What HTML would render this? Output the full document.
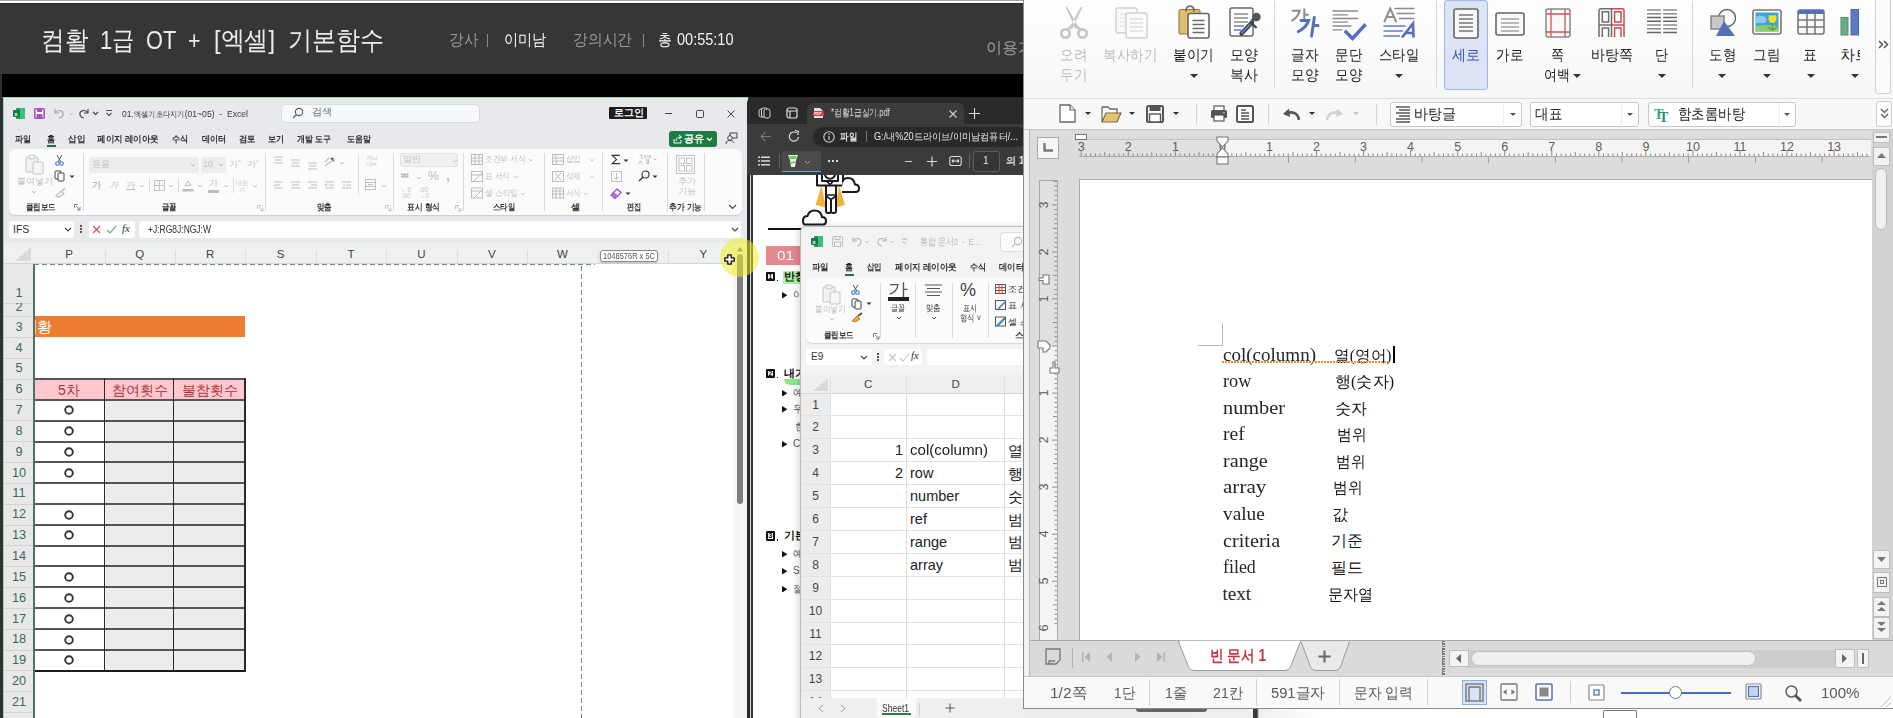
<!DOCTYPE html>
<html><head><meta charset="utf-8">
<style>
*{box-sizing:border-box}
body{margin:0;width:1893px;height:718px;position:relative;overflow:hidden;background:#303030;font-family:"Liberation Sans",sans-serif}
.a{position:absolute}
.t{position:absolute;white-space:nowrap;line-height:1}
</style></head><body>
<!-- ===== HEADER ===== -->
<div class="a" style="left:0;top:0;width:1023px;height:74px;background:linear-gradient(#a5a5a5 0 1px,#fcfcfc 1px 3px,#2c2c2c 3px 4px,#363636 4px)"></div>
<div class="t" style="transform:scaleX(0.9096);transform-origin:0 0;left:40.7px;top:28px;font-size:25.5px;color:#ececec">컴활</div>
<div class="t" style="transform:scaleX(0.8610);transform-origin:0 0;left:100px;top:28px;font-size:25.5px;color:#ececec">1급</div>
<div class="t" style="transform:scaleX(0.8526);transform-origin:0 0;left:145.6px;top:28px;font-size:25.5px;color:#ececec">OT</div>
<div class="t" style="transform:scaleX(0.8386);transform-origin:0 0;left:188px;top:28px;font-size:25.5px;color:#ececec">+</div>
<div class="t" style="transform:scaleX(0.9218);transform-origin:0 0;left:213.7px;top:28px;font-size:25.5px;color:#ececec">[엑셀]</div>
<div class="t" style="transform:scaleX(0.9288);transform-origin:0 0;left:288px;top:28px;font-size:25.5px;color:#ececec">기본함수</div>
<div class="t" style="transform:scaleX(0.9125);transform-origin:0 0;left:448.8px;top:32px;font-size:16px;color:#9a9a9a">강사</div>
<div class="t" style="transform:scaleX(0.8854);transform-origin:0 0;left:503.5px;top:32px;font-size:16px;color:#f4f4f4">이미남</div>
<div class="t" style="transform:scaleX(0.9234);transform-origin:0 0;left:573.4px;top:32px;font-size:16px;color:#9a9a9a">강의시간</div>
<div class="t" style="transform:scaleX(0.8625);transform-origin:0 0;left:657.7px;top:32px;font-size:16px;color:#f4f4f4">총</div>
<div class="t" style="transform:scaleX(0.9072);transform-origin:0 0;left:676.5px;top:32px;font-size:16px;color:#f4f4f4">00:55:10</div>
<div class="a" style="left:486.5px;top:34px;width:1px;height:13px;background:#8c8c8c"></div>
<div class="a" style="left:642.5px;top:34px;width:1px;height:13px;background:#8c8c8c"></div>
<div class="t" style="left:986px;top:40px;font-size:16px;color:#9a9a9a">이용가</div>
<div class="a" style="left:2px;top:74px;width:1021px;height:23px;background:#000"></div>


<!-- ===== EXCEL MAIN ===== -->
<div class="a" style="left:3px;top:97px;width:745px;height:621px;background:#e7e9ec;border-top:1px solid #9fd6b8;border-left:1px solid #9fd6b8"></div>
<!-- title row icons -->
<svg class="a" style="left:13px;top:108px" width="12" height="11" viewBox="0 0 12 11"><rect x="3" y="0" width="9" height="11" rx="1" fill="#1f9d55"/><rect x="7" y="0" width="5" height="11" fill="#37c27a"/><rect x="0" y="2" width="7" height="7" rx="1" fill="#107c41"/><text x="1.3" y="7.8" font-size="6" fill="#fff" font-family="Liberation Sans" font-weight="bold">x</text></svg>
<svg class="a" style="left:34px;top:108px" width="11" height="11" viewBox="0 0 11 11"><rect x="0.8" y="0.8" width="9.4" height="9.4" rx="1" fill="#fff" stroke="#a64fc2" stroke-width="1.6"/><rect x="3" y="1" width="5" height="3" fill="#a64fc2"/><rect x="2.5" y="6" width="6" height="4" fill="#a64fc2"/></svg>
<svg class="a" style="left:53px;top:108px" width="12" height="11" viewBox="0 0 12 11"><path d="M2 1 L2 5 L6 5 M2 5 C4 1 11 2 10 7 C9 9 7 10 6 10" fill="none" stroke="#a8a8a8" stroke-width="1.2"/></svg>
<div class="t" style="left:68px;top:109px;font-size:7px;color:#b0b0b0">⌄</div>
<svg class="a" style="left:78px;top:108px" width="12" height="11" viewBox="0 0 12 11"><path d="M10 1 L10 5 L6 5 M10 5 C8 1 1 2 2 7 C3 9 5 10 6 10" fill="none" stroke="#4a4a4a" stroke-width="1.2"/></svg>
<svg class="a" style="left:92px;top:111px" width="7" height="5" viewBox="0 0 7 5"><path d="M1 1 L3.5 3.5 L6 1" fill="none" stroke="#444" stroke-width="1.1"/></svg>
<svg class="a" style="left:105px;top:109px" width="8" height="8" viewBox="0 0 8 8"><path d="M1 1.5 H7 M1.5 4 L4 6.5 L6.5 4" fill="none" stroke="#555" stroke-width="1.1"/></svg>
<div class="t" style="transform:scaleX(0.9053);transform-origin:0 0;left:122px;top:109px;font-size:9.5px;color:#3a3a3a">01.<span style="font-size:8px">엑셀기초다지기</span>(01~05)&nbsp;&nbsp;-&nbsp;&nbsp;Excel</div>
<!-- search -->
<div class="a" style="left:281px;top:104px;width:199px;height:19px;background:#f7f8f9;border:1px solid #d9dcdf;border-radius:4px"></div>
<svg class="a" style="left:292px;top:107px" width="12" height="12" viewBox="0 0 12 12"><circle cx="7" cy="5" r="3.6" fill="none" stroke="#555" stroke-width="1.1"/><path d="M4.3 7.7 L1 11" stroke="#555" stroke-width="1.2"/></svg>
<div class="t" style="left:312px;top:107px;font-size:10px;color:#6a6a6a">검색</div>
<!-- login / window controls -->
<div class="a" style="left:609px;top:107px;width:38px;height:12px;background:#1d1d1d;border-radius:1px"></div>
<div class="t" style="left:614px;top:108px;font-size:9.5px;color:#fff;font-weight:bold">로그인</div>
<div class="a" style="left:665px;top:113px;width:7px;height:1px;background:#444"></div>
<div class="a" style="left:696px;top:110px;width:8px;height:8px;border:1px solid #444;border-radius:1.5px"></div>
<svg class="a" style="left:727px;top:110px" width="8" height="8" viewBox="0 0 8 8"><path d="M0.5 0.5 L7.5 7.5 M7.5 0.5 L0.5 7.5" stroke="#444" stroke-width="1"/></svg>
<!-- tabs -->
<div class="t" style="transform:scaleX(0.8889);transform-origin:0 0;left:15px;top:134.5px;font-size:9px;color:#2e2e2e;font-weight:bold">파일</div>
<div class="t" style="transform:scaleX(0.8889);transform-origin:0 0;left:47px;top:134.5px;font-size:9px;color:#2e2e2e;font-weight:bold">홈</div>
<div class="t" style="transform:scaleX(0.9500);transform-origin:0 0;left:67.6px;top:134.5px;font-size:9px;color:#2e2e2e;font-weight:bold">삽입</div>
<div class="t" style="transform:scaleX(0.9463);transform-origin:0 0;left:97px;top:134.5px;font-size:9px;color:#2e2e2e;font-weight:bold">페이지 레이아웃</div>
<div class="t" style="transform:scaleX(0.9111);transform-origin:0 0;left:172px;top:134.5px;font-size:9px;color:#2e2e2e;font-weight:bold">수식</div>
<div class="t" style="transform:scaleX(0.9074);transform-origin:0 0;left:201.5px;top:134.5px;font-size:9px;color:#2e2e2e;font-weight:bold">데이터</div>
<div class="t" style="transform:scaleX(0.9278);transform-origin:0 0;left:239px;top:134.5px;font-size:9px;color:#2e2e2e;font-weight:bold">검토</div>
<div class="t" style="transform:scaleX(0.8889);transform-origin:0 0;left:268px;top:134.5px;font-size:9px;color:#2e2e2e;font-weight:bold">보기</div>
<div class="t" style="transform:scaleX(0.8828);transform-origin:0 0;left:297px;top:134.5px;font-size:9px;color:#2e2e2e;font-weight:bold">개발 도구</div>
<div class="t" style="transform:scaleX(0.8889);transform-origin:0 0;left:347px;top:134.5px;font-size:9px;color:#2e2e2e;font-weight:bold">도움말</div>
<div class="a" style="left:47px;top:145px;width:9px;height:2px;background:#1e7145"></div>
<!-- share -->
<div class="a" style="left:669px;top:131px;width:48px;height:16px;background:#1e7b45;border-radius:3px"></div>
<svg class="a" style="left:673px;top:134px" width="10" height="10" viewBox="0 0 10 10"><path d="M1 5 V9 H8 V6 M3 7 C3 4 5 3 8 3 M6 1 L8.5 3 L6 5" fill="none" stroke="#fff" stroke-width="1"/></svg>
<div class="t" style="left:684px;top:134px;font-size:10px;color:#fff;font-weight:bold">공유</div>
<svg class="a" style="left:706px;top:137px" width="7" height="5" viewBox="0 0 7 5"><path d="M1 1 L3.5 3.5 L6 1" fill="none" stroke="#fff" stroke-width="1.1"/></svg>
<svg class="a" style="left:725px;top:132px" width="13" height="13" viewBox="0 0 13 13"><rect x="5" y="1" width="7" height="5" fill="none" stroke="#444" stroke-width="1"/><circle cx="5" cy="6" r="2.3" fill="#e7e9ec" stroke="#444" stroke-width="1"/><path d="M1 12 C1 9 3 8.5 5 8.5 C7 8.5 8 9 9 11" fill="none" stroke="#444" stroke-width="1"/></svg>
<!-- ribbon panel -->
<div class="a" style="left:9px;top:149px;width:733px;height:66px;background:#fbfbfb;border-radius:6px;box-shadow:0 1px 1px rgba(0,0,0,0.12)"></div>


<!-- clipboard group -->
<svg class="a" style="left:25px;top:154px" width="20" height="21" viewBox="0 0 20 21"><rect x="1" y="3" width="12" height="15" rx="1" fill="#f2f2f2" stroke="#c4c4c4"/><rect x="4" y="1" width="6" height="4" rx="1" fill="#f2f2f2" stroke="#c4c4c4"/><rect x="8" y="8" width="10" height="12" rx="1" fill="#f6f6f6" stroke="#c4c4c4"/></svg>
<div class="t" style="left:17px;top:177px;font-size:8.5px;color:#bcbcbc">붙여넣기</div>
<svg class="a" style="left:31px;top:190px" width="6" height="4" viewBox="0 0 6 4"><path d="M1 1 L3 3 L5 1" fill="none" stroke="#c0c0c0"/></svg>
<svg class="a" style="left:55px;top:154px" width="9" height="12" viewBox="0 0 9 12"><path d="M2 1 L6 8 M7 1 L3 8" stroke="#555" stroke-width="1"/><circle cx="2.5" cy="9.5" r="1.8" fill="none" stroke="#3a7fc8" stroke-width="1.1"/><circle cx="6.5" cy="9.5" r="1.8" fill="none" stroke="#3a7fc8" stroke-width="1.1"/></svg>
<svg class="a" style="left:54px;top:170px" width="12" height="12" viewBox="0 0 12 12"><rect x="1" y="1" width="6" height="8" rx="1" fill="none" stroke="#444"/><rect x="4" y="3" width="6" height="8" rx="1" fill="#fbfbfb" stroke="#444"/></svg>
<svg class="a" style="left:69px;top:175px" width="6" height="4" viewBox="0 0 6 4"><path d="M0.5 0.5 L3 3 L5.5 0.5" fill="#333"/></svg>
<svg class="a" style="left:55px;top:187px" width="11" height="11" viewBox="0 0 11 11"><path d="M1 9 L6 4 L9 7 L4 10 Z" fill="none" stroke="#bdbdbd" stroke-width="1.2"/><path d="M7 4 L10 1" stroke="#bdbdbd" stroke-width="1.6"/></svg>
<div class="t" style="transform:scaleX(0.8333);transform-origin:0 0;left:26.3px;top:203px;font-size:9px;color:#333;font-weight:bold">클립보드</div>
<svg class="a" style="left:74px;top:204px" width="7" height="7" viewBox="0 0 7 7"><path d="M0.5 0.5 H4 M0.5 0.5 V4 M2 2 L6 6 M6 3 V6 H3" fill="none" stroke="#777" stroke-width="0.9"/></svg>
<div class="a" style="left:83px;top:153px;width:1px;height:58px;background:#dadada"></div>
<!-- font group -->
<div class="a" style="left:89px;top:157px;width:110px;height:16px;background:#ededed;border-radius:3px"></div>
<div class="t" style="left:92px;top:160px;font-size:9px;color:#c2c2c2">돋움</div>
<svg class="a" style="left:190px;top:163px" width="6" height="4" viewBox="0 0 6 4"><path d="M1 1 L3 3 L5 1" fill="none" stroke="#b8b8b8"/></svg>
<div class="a" style="left:201px;top:157px;width:25px;height:16px;background:#ededed;border-radius:3px"></div>
<div class="t" style="left:203px;top:160px;font-size:9px;color:#c2c2c2">10</div>
<svg class="a" style="left:218px;top:163px" width="6" height="4" viewBox="0 0 6 4"><path d="M1 1 L3 3 L5 1" fill="none" stroke="#b8b8b8"/></svg>
<div class="t" style="left:229px;top:160px;font-size:9px;color:#bdbdbd">가ˆ</div>
<div class="t" style="left:247px;top:160px;font-size:9px;color:#bdbdbd">가ˇ</div>
<div class="t" style="left:92px;top:181px;font-size:9px;color:#bcbcbc;font-weight:bold">가</div>
<div class="t" style="left:109px;top:181px;font-size:9px;color:#bcbcbc;font-style:italic">가</div>
<div class="t" style="left:126px;top:181px;font-size:9px;color:#bcbcbc;text-decoration:underline">가</div>
<svg class="a" style="left:139px;top:184px" width="6" height="4" viewBox="0 0 6 4"><path d="M1 1 L3 3 L5 1" fill="none" stroke="#c0c0c0"/></svg>
<div class="a" style="left:149px;top:178px;width:1px;height:15px;background:#dcdcdc"></div>
<svg class="a" style="left:154px;top:180px" width="11" height="11" viewBox="0 0 11 11"><rect x="0.5" y="0.5" width="10" height="10" fill="none" stroke="#c4c4c4"/><path d="M5.5 0.5 V10.5 M0.5 5.5 H10.5" stroke="#c4c4c4"/></svg>
<svg class="a" style="left:168px;top:184px" width="6" height="4" viewBox="0 0 6 4"><path d="M1 1 L3 3 L5 1" fill="none" stroke="#c0c0c0"/></svg>
<div class="a" style="left:178px;top:178px;width:1px;height:15px;background:#dcdcdc"></div>
<svg class="a" style="left:182px;top:179px" width="12" height="13" viewBox="0 0 12 13"><path d="M3 7 L6 2 L9 6 Z" fill="none" stroke="#bbb"/><rect x="0.5" y="10" width="11" height="2.5" fill="#bdbdbd"/></svg>
<svg class="a" style="left:197px;top:184px" width="6" height="4" viewBox="0 0 6 4"><path d="M1 1 L3 3 L5 1" fill="none" stroke="#c0c0c0"/></svg>
<div class="t" style="left:209px;top:179px;font-size:9px;color:#bcbcbc">가</div>
<div class="a" style="left:208px;top:190px;width:11px;height:2.5px;background:#bdbdbd"></div>
<svg class="a" style="left:223px;top:184px" width="6" height="4" viewBox="0 0 6 4"><path d="M1 1 L3 3 L5 1" fill="none" stroke="#c0c0c0"/></svg>
<div class="a" style="left:233px;top:178px;width:1px;height:15px;background:#dcdcdc"></div>
<div class="t" style="left:236px;top:180px;font-size:6px;color:#c4c4c4;line-height:1.1">내천<br>&nbsp;&nbsp;기</div>
<svg class="a" style="left:252px;top:184px" width="6" height="4" viewBox="0 0 6 4"><path d="M1 1 L3 3 L5 1" fill="none" stroke="#c0c0c0"/></svg>
<div class="t" style="transform:scaleX(0.8222);transform-origin:0 0;left:162px;top:203px;font-size:9px;color:#333;font-weight:bold">글꼴</div>
<svg class="a" style="left:257px;top:205px" width="7" height="7" viewBox="0 0 7 7"><path d="M0.5 0.5 H4 M0.5 0.5 V4 M2 2 L6 6 M6 3 V6 H3" fill="none" stroke="#bbb" stroke-width="0.9"/></svg>
<div class="a" style="left:265px;top:153px;width:1px;height:58px;background:#dadada"></div>
<!-- align group -->
<svg class="a" style="left:273px;top:155px" width="80" height="36" viewBox="0 0 80 36" stroke="#bdbdbd" stroke-width="1.1">
<path d="M1 2 H10 M2 5 H9 M1 8 H10"/><path d="M18 5 H27 M19 8 H26 M18 11 H27"/><path d="M35 8 H44 M36 11 H43 M35 14 H44"/><path d="M52 11 L61 4 M57 3 H61 V7 M52 7 L56 3" />
<path d="M1 27 H10 M1 30 H7 M1 33 H10"/><path d="M18 27 H27 M19 30 H26 M18 33 H27"/><path d="M35 27 H44 M38 30 H44 M35 33 H44"/><path d="M52 27 H61 M56 30 H61 M52 33 H61 M52 30 L54 29 M52 30 L54 31"/><path d="M69 27 H78 M73 30 H78 M69 33 H78 M70 30 H72"/>
</svg>
<svg class="a" style="left:339px;top:161px" width="6" height="4" viewBox="0 0 6 4"><path d="M1 1 L3 3 L5 1" fill="none" stroke="#c0c0c0"/></svg>
<div class="a" style="left:358px;top:155px;width:1px;height:40px;background:#dcdcdc"></div>
<div class="t" style="left:366px;top:155px;font-size:6px;color:#c0c0c0;line-height:1">가나<br>다↵</div>
<svg class="a" style="left:365px;top:179px" width="11" height="11" viewBox="0 0 11 11"><rect x="0.5" y="0.5" width="10" height="10" fill="none" stroke="#c0c0c0"/><path d="M0.5 3.5 H10.5 M0.5 7.5 H10.5 M3 5.5 H8" stroke="#c0c0c0"/></svg>
<svg class="a" style="left:381px;top:184px" width="6" height="4" viewBox="0 0 6 4"><path d="M1 1 L3 3 L5 1" fill="none" stroke="#c0c0c0"/></svg>
<div class="t" style="transform:scaleX(0.8333);transform-origin:0 0;left:317px;top:203px;font-size:9px;color:#333;font-weight:bold">맞춤</div>
<svg class="a" style="left:385px;top:205px" width="7" height="7" viewBox="0 0 7 7"><path d="M0.5 0.5 H4 M0.5 0.5 V4 M2 2 L6 6 M6 3 V6 H3" fill="none" stroke="#bbb" stroke-width="0.9"/></svg>
<div class="a" style="left:393px;top:153px;width:1px;height:58px;background:#dadada"></div>
<!-- number group -->
<div class="a" style="left:400px;top:152.5px;width:58px;height:14.5px;background:#f0f0f0;border:1px solid #e2e2e2;border-radius:3px"></div>
<div class="t" style="left:403px;top:155px;font-size:8.5px;color:#c4c4c4">일반</div>
<svg class="a" style="left:452px;top:159px" width="6" height="4" viewBox="0 0 6 4"><path d="M1 1 L3 3 L5 1" fill="none" stroke="#c8c8c8"/></svg>
<div class="t" style="left:401px;top:172px;font-size:8px;color:#c0c0c0;font-weight:bold">₩</div>
<svg class="a" style="left:416px;top:176px" width="6" height="4" viewBox="0 0 6 4"><path d="M1 1 L3 3 L5 1" fill="none" stroke="#c0c0c0"/></svg>
<div class="t" style="left:428px;top:170px;font-size:12px;color:#bdbdbd">%</div>
<div class="t" style="left:446px;top:168px;font-size:14px;color:#bdbdbd;font-weight:bold">,</div>
<div class="t" style="left:401px;top:187px;font-size:6.5px;color:#c4c4c4;line-height:0.9">←0<br>.00</div>
<div class="t" style="left:419px;top:187px;font-size:6.5px;color:#c4c4c4;line-height:0.9">.00<br>→0</div>
<div class="t" style="transform:scaleX(0.8568);transform-origin:0 0;left:407px;top:203px;font-size:9px;color:#333;font-weight:bold">표시 형식</div>
<svg class="a" style="left:455px;top:205px" width="7" height="7" viewBox="0 0 7 7"><path d="M0.5 0.5 H4 M0.5 0.5 V4 M2 2 L6 6 M6 3 V6 H3" fill="none" stroke="#bbb" stroke-width="0.9"/></svg>
<div class="a" style="left:463px;top:153px;width:1px;height:58px;background:#dadada"></div>
<!-- styles group -->
<svg class="a" style="left:471px;top:154px" width="12" height="45" viewBox="0 0 12 45" fill="none" stroke="#bdbdbd"><rect x="0.5" y="0.5" width="11" height="10"/><path d="M0.5 4 H11.5 M0.5 7 H11.5 M4 0.5 V10.5 M8 0.5 V10.5"/><rect x="0.5" y="17.5" width="11" height="10"/><path d="M0.5 21 H11.5 M3 27 L11 19"/><rect x="0.5" y="34" width="11" height="10"/><path d="M0.5 37 H11.5 M3 44 L11 36"/></svg>
<div class="t" style="transform:scaleX(0.8524);transform-origin:0 0;left:485px;top:155px;font-size:9px;color:#c2c2c2">조건부 서식</div><svg class="a" style="left:528px;top:158.0px" width="6" height="4" viewBox="0 0 6 4"><path d="M1 1 L3 3 L5 1" fill="none" stroke="#c4c4c4" stroke-width="0.9"/></svg>
<div class="t" style="transform:scaleX(0.8470);transform-origin:0 0;left:485px;top:172px;font-size:9px;color:#c2c2c2">표 서식</div><svg class="a" style="left:512.5px;top:175.0px" width="6" height="4" viewBox="0 0 6 4"><path d="M1 1 L3 3 L5 1" fill="none" stroke="#c4c4c4" stroke-width="0.9"/></svg>
<div class="t" style="transform:scaleX(0.8568);transform-origin:0 0;left:485px;top:189px;font-size:9px;color:#c2c2c2">셀 스타일</div><svg class="a" style="left:520px;top:192.0px" width="6" height="4" viewBox="0 0 6 4"><path d="M1 1 L3 3 L5 1" fill="none" stroke="#c4c4c4" stroke-width="0.9"/></svg>
<div class="t" style="transform:scaleX(0.8148);transform-origin:0 0;left:493px;top:203px;font-size:9px;color:#333;font-weight:bold">스타일</div>
<div class="a" style="left:544px;top:153px;width:1px;height:58px;background:#dadada"></div>
<!-- cells group -->
<svg class="a" style="left:552px;top:154px" width="12" height="45" viewBox="0 0 12 45" fill="none" stroke="#bdbdbd"><rect x="0.5" y="0.5" width="11" height="10"/><path d="M0.5 4 H11.5 M0.5 7 H11.5 M4 0.5 V10.5"/><rect x="0.5" y="17.5" width="11" height="10"/><path d="M3 19 L9 26 M9 19 L3 26"/><rect x="0.5" y="34" width="11" height="10"/><path d="M0.5 37 H11.5 M0.5 40 H11.5 M4 34 V44 M8 34 V44"/></svg>
<div class="t" style="transform:scaleX(0.8333);transform-origin:0 0;left:566px;top:155px;font-size:9px;color:#c2c2c2">삽입</div><svg class="a" style="left:588.5px;top:158.0px" width="6" height="4" viewBox="0 0 6 4"><path d="M1 1 L3 3 L5 1" fill="none" stroke="#c4c4c4" stroke-width="0.9"/></svg>
<div class="t" style="transform:scaleX(0.8333);transform-origin:0 0;left:566px;top:172px;font-size:9px;color:#c2c2c2">삭제</div><svg class="a" style="left:588.5px;top:175.0px" width="6" height="4" viewBox="0 0 6 4"><path d="M1 1 L3 3 L5 1" fill="none" stroke="#c4c4c4" stroke-width="0.9"/></svg>
<div class="t" style="transform:scaleX(0.8333);transform-origin:0 0;left:566px;top:189px;font-size:9px;color:#c2c2c2">서식</div><svg class="a" style="left:583px;top:192.0px" width="6" height="4" viewBox="0 0 6 4"><path d="M1 1 L3 3 L5 1" fill="none" stroke="#c4c4c4" stroke-width="0.9"/></svg>
<div class="t" style="left:571px;top:203px;font-size:9px;color:#333;font-weight:bold">셀</div>
<div class="a" style="left:602px;top:153px;width:1px;height:58px;background:#dadada"></div>
<!-- editing group -->
<svg class="a" style="left:610px;top:154px" width="12" height="11" viewBox="610 154 12 11"><path d="M620 155.4 H612.2 L616.6 159.5 L612.2 163.6 H620.2" fill="none" stroke="#333" stroke-width="1.1"/></svg>
<svg class="a" style="left:623px;top:159px" width="6" height="4" viewBox="0 0 6 4"><path d="M0.5 0.5 L3 3 L5.5 0.5" fill="#333"/></svg>
<svg class="a" style="left:638px;top:154px" width="19" height="11" viewBox="0 0 19 11" fill="none" stroke="#bdbdbd"><path d="M6 2 H13 L10.5 5.5 V9.5 L9 10 V5.5 Z"/><path d="M1.5 1 H4 V5 M1 9.5 L2.5 7 L4 9.5"/><path d="M15.5 4.5 L17 6 L18.5 4.5"/></svg>
<svg class="a" style="left:611px;top:171px" width="11" height="11" viewBox="0 0 11 11" fill="none" stroke="#c0c0c0"><rect x="0.5" y="0.5" width="10" height="10"/><path d="M5.5 2 V8 M3 6 L5.5 8.5 L8 6"/></svg>
<svg class="a" style="left:638px;top:170px" width="12" height="12" viewBox="0 0 12 12"><circle cx="7.5" cy="4.5" r="3.5" fill="none" stroke="#333" stroke-width="1.1"/><path d="M5 7 L1 11" stroke="#333" stroke-width="1.3"/></svg>
<svg class="a" style="left:652px;top:175px" width="6" height="4" viewBox="0 0 6 4"><path d="M0.5 0.5 L3 3 L5.5 0.5" fill="#333"/></svg>
<svg class="a" style="left:610px;top:187px" width="12" height="12" viewBox="0 0 12 12"><path d="M1 8 L7 2 L11 5.5 L5 11.5 Z" fill="#fff" stroke="#a552c4" stroke-width="1.4" stroke-linejoin="round"/><path d="M1 8 L4 5 L7.8 8.5 L5 11.5 Z" fill="#b86ad6"/></svg>
<svg class="a" style="left:625px;top:192px" width="6" height="4" viewBox="0 0 6 4"><path d="M0.5 0.5 L3 3 L5.5 0.5" fill="#333"/></svg>
<div class="t" style="transform:scaleX(0.8056);transform-origin:0 0;left:627px;top:203px;font-size:9px;color:#333;font-weight:bold">편집</div>
<div class="a" style="left:667px;top:153px;width:1px;height:58px;background:#dadada"></div>
<svg class="a" style="left:676px;top:155px" width="19" height="19" viewBox="0 0 19 19" fill="none" stroke="#c4c4c4"><rect x="0.5" y="0.5" width="18" height="18"/><rect x="3" y="3" width="5.5" height="5.5"/><rect x="10.5" y="3" width="5.5" height="5.5"/><rect x="3" y="10.5" width="5.5" height="5.5"/><rect x="10.5" y="10.5" width="5.5" height="5.5"/></svg>
<div class="t" style="left:678px;top:177px;font-size:8.5px;color:#c4c4c4;line-height:1.15">추가<br>기능</div>
<div class="t" style="transform:scaleX(0.8568);transform-origin:0 0;left:669px;top:203px;font-size:9px;color:#333;font-weight:bold">추가 기능</div>
<div class="a" style="left:704px;top:153px;width:1px;height:58px;background:#dadada"></div>
<svg class="a" style="left:728px;top:204px" width="9" height="6" viewBox="0 0 9 6"><path d="M1 1 L4.5 4.5 L8 1" fill="none" stroke="#444" stroke-width="1.1"/></svg>
<!-- formula row -->
<div class="a" style="left:9px;top:221px;width:65px;height:17px;background:#fff;border-radius:3px"></div>
<div class="t" style="left:13px;top:224px;font-size:10.5px;color:#333">IFS</div>
<svg class="a" style="left:64px;top:227px" width="8" height="5" viewBox="0 0 8 5"><path d="M1 1 L4 4 L7 1" fill="none" stroke="#444" stroke-width="1.1"/></svg>
<div class="a" style="left:80px;top:225px;width:2px;height:2px;background:#555;box-shadow:0 3px 0 #555,0 6px 0 #555"></div>
<div class="a" style="left:89px;top:221px;width:46px;height:17px;background:#fff;border-radius:3px"></div>
<svg class="a" style="left:92px;top:225px" width="9" height="9" viewBox="0 0 9 9"><path d="M1 1 L8 8 M8 1 L1 8" stroke="#d9534f" stroke-width="1.2"/></svg>
<svg class="a" style="left:106px;top:225px" width="11" height="9" viewBox="0 0 11 9"><path d="M1 5 L4 8 L10 1" fill="none" stroke="#6cba7e" stroke-width="1.2"/></svg>
<div class="t" style="left:122px;top:223px;font-size:11px;color:#333;font-family:'Liberation Serif',serif;font-style:italic">fx</div>
<div class="a" style="left:139px;top:221px;width:602px;height:17px;background:#fff;border-radius:3px"></div>
<div class="t" style="transform:scaleX(0.8088);transform-origin:0 0;left:148px;top:224px;font-size:10.5px;color:#333">+J:RG8J:NGJ:W</div>
<svg class="a" style="left:731px;top:227px" width="8" height="5" viewBox="0 0 8 5"><path d="M1 1 L4 4 L7 1" fill="none" stroke="#444" stroke-width="1.1"/></svg>

<div class="a" style="left:4px;top:238px;width:729px;height:5px;background:#e7e9ec"></div>
<div class="a" style="left:4px;top:243px;width:729px;height:21px;background:#eff0f0"></div>
<svg class="a" style="left:14px;top:246px" width="18" height="16" viewBox="0 0 18 16"><path d="M17 1 V15 H1 Z" fill="#d9dbdb"/></svg>
<div class="a" style="left:4px;top:264px;width:30px;height:454px;background:#e8e8e8"></div>
<div class="a" style="left:34px;top:264px;width:699px;height:454px;background:#fff"></div>
<div class="t" style="left:59.2px;top:249px;width:20px;text-align:center;font-size:11.5px;color:#404040">P</div>
<div class="a" style="left:104.5px;top:250px;width:1px;height:14px;background:#dcdede"></div>
<div class="t" style="left:129.7px;top:249px;width:20px;text-align:center;font-size:11.5px;color:#404040">Q</div>
<div class="a" style="left:174.9px;top:250px;width:1px;height:14px;background:#dcdede"></div>
<div class="t" style="left:200.1px;top:249px;width:20px;text-align:center;font-size:11.5px;color:#404040">R</div>
<div class="a" style="left:245.4px;top:250px;width:1px;height:14px;background:#dcdede"></div>
<div class="t" style="left:270.6px;top:249px;width:20px;text-align:center;font-size:11.5px;color:#404040">S</div>
<div class="a" style="left:315.8px;top:250px;width:1px;height:14px;background:#dcdede"></div>
<div class="t" style="left:341.0px;top:249px;width:20px;text-align:center;font-size:11.5px;color:#404040">T</div>
<div class="a" style="left:386.2px;top:250px;width:1px;height:14px;background:#dcdede"></div>
<div class="t" style="left:411.5px;top:249px;width:20px;text-align:center;font-size:11.5px;color:#404040">U</div>
<div class="a" style="left:456.7px;top:250px;width:1px;height:14px;background:#dcdede"></div>
<div class="t" style="left:481.9px;top:249px;width:20px;text-align:center;font-size:11.5px;color:#404040">V</div>
<div class="a" style="left:527.2px;top:250px;width:1px;height:14px;background:#dcdede"></div>
<div class="t" style="left:552.4px;top:249px;width:20px;text-align:center;font-size:11.5px;color:#404040">W</div>
<div class="a" style="left:597.6px;top:250px;width:1px;height:14px;background:#dcdede"></div>
<div class="a" style="left:668.1px;top:250px;width:1px;height:14px;background:#dcdede"></div>
<div class="t" style="left:693.3px;top:249px;width:20px;text-align:center;font-size:11.5px;color:#404040">Y</div>
<div class="a" style="left:738.5px;top:250px;width:1px;height:14px;background:#dcdede"></div>
<div class="a" style="left:4px;top:263px;width:729px;height:1px;background:#d4d6d6"></div>
<div class="a" style="left:4px;top:302.7px;width:30px;height:1px;background:#d2d4d3"></div>
<div class="t" style="left:4px;top:286.5px;width:30px;text-align:center;font-size:12.8px;color:#3a6a55">1</div>
<div class="a" style="left:4px;top:315.7px;width:30px;height:1px;background:#d2d4d3"></div>
<div class="t" style="left:4px;top:303.2px;width:30px;height:13px;overflow:hidden;text-align:center;font-size:12.8px;color:#3a6a55"><span style="position:relative;top:-2px">2</span></div>
<div class="a" style="left:4px;top:336.8px;width:30px;height:1px;background:#d2d4d3"></div>
<div class="t" style="left:4px;top:320.6px;width:30px;text-align:center;font-size:12.8px;color:#3a6a55">3</div>
<div class="a" style="left:4px;top:357.7px;width:30px;height:1px;background:#d2d4d3"></div>
<div class="t" style="left:4px;top:341.5px;width:30px;text-align:center;font-size:12.8px;color:#3a6a55">4</div>
<div class="a" style="left:4px;top:378.5px;width:30px;height:1px;background:#d2d4d3"></div>
<div class="t" style="left:4px;top:362.3px;width:30px;text-align:center;font-size:12.8px;color:#3a6a55">5</div>
<div class="a" style="left:4px;top:399.4px;width:30px;height:1px;background:#d2d4d3"></div>
<div class="t" style="left:4px;top:383.2px;width:30px;text-align:center;font-size:12.8px;color:#3a6a55">6</div>
<div class="a" style="left:4px;top:420.2px;width:30px;height:1px;background:#d2d4d3"></div>
<div class="t" style="left:4px;top:404.0px;width:30px;text-align:center;font-size:12.8px;color:#3a6a55">7</div>
<div class="a" style="left:4px;top:441.1px;width:30px;height:1px;background:#d2d4d3"></div>
<div class="t" style="left:4px;top:424.9px;width:30px;text-align:center;font-size:12.8px;color:#3a6a55">8</div>
<div class="a" style="left:4px;top:461.9px;width:30px;height:1px;background:#d2d4d3"></div>
<div class="t" style="left:4px;top:445.7px;width:30px;text-align:center;font-size:12.8px;color:#3a6a55">9</div>
<div class="a" style="left:4px;top:482.8px;width:30px;height:1px;background:#d2d4d3"></div>
<div class="t" style="left:4px;top:466.6px;width:30px;text-align:center;font-size:12.8px;color:#3a6a55">10</div>
<div class="a" style="left:4px;top:503.6px;width:30px;height:1px;background:#d2d4d3"></div>
<div class="t" style="left:4px;top:487.4px;width:30px;text-align:center;font-size:12.8px;color:#3a6a55">11</div>
<div class="a" style="left:4px;top:524.5px;width:30px;height:1px;background:#d2d4d3"></div>
<div class="t" style="left:4px;top:508.3px;width:30px;text-align:center;font-size:12.8px;color:#3a6a55">12</div>
<div class="a" style="left:4px;top:545.3px;width:30px;height:1px;background:#d2d4d3"></div>
<div class="t" style="left:4px;top:529.1px;width:30px;text-align:center;font-size:12.8px;color:#3a6a55">13</div>
<div class="a" style="left:4px;top:566.1px;width:30px;height:1px;background:#d2d4d3"></div>
<div class="t" style="left:4px;top:549.9px;width:30px;text-align:center;font-size:12.8px;color:#3a6a55">14</div>
<div class="a" style="left:4px;top:587.0px;width:30px;height:1px;background:#d2d4d3"></div>
<div class="t" style="left:4px;top:570.8px;width:30px;text-align:center;font-size:12.8px;color:#3a6a55">15</div>
<div class="a" style="left:4px;top:607.9px;width:30px;height:1px;background:#d2d4d3"></div>
<div class="t" style="left:4px;top:591.7px;width:30px;text-align:center;font-size:12.8px;color:#3a6a55">16</div>
<div class="a" style="left:4px;top:628.7px;width:30px;height:1px;background:#d2d4d3"></div>
<div class="t" style="left:4px;top:612.5px;width:30px;text-align:center;font-size:12.8px;color:#3a6a55">17</div>
<div class="a" style="left:4px;top:649.6px;width:30px;height:1px;background:#d2d4d3"></div>
<div class="t" style="left:4px;top:633.4px;width:30px;text-align:center;font-size:12.8px;color:#3a6a55">18</div>
<div class="a" style="left:4px;top:670.4px;width:30px;height:1px;background:#d2d4d3"></div>
<div class="t" style="left:4px;top:654.2px;width:30px;text-align:center;font-size:12.8px;color:#3a6a55">19</div>
<div class="a" style="left:4px;top:691.3px;width:30px;height:1px;background:#d2d4d3"></div>
<div class="t" style="left:4px;top:675.1px;width:30px;text-align:center;font-size:12.8px;color:#3a6a55">20</div>
<div class="a" style="left:4px;top:712.1px;width:30px;height:1px;background:#d2d4d3"></div>
<div class="t" style="left:4px;top:695.9px;width:30px;text-align:center;font-size:12.8px;color:#3a6a55">21</div>
<div class="a" style="left:4px;top:733.0px;width:30px;height:1px;background:#d2d4d3"></div>
<div class="t" style="left:4px;top:716.8px;width:30px;text-align:center;font-size:12.8px;color:#3a6a55">22</div>
<div class="a" style="left:34px;top:316px;width:211px;height:21px;background:#ec7c30"></div>
<div class="t" style="left:37px;top:318.5px;font-size:15px;color:#fff">황</div><div class="a" style="left:34.5px;top:320px;width:1px;height:14px;background:#f6c8a8"></div>
<div class="a" style="left:34px;top:379.0px;width:211px;height:20.85px;background:#ffc7ce"></div>
<div class="a" style="left:104.5px;top:399.9px;width:140.5px;height:271.1px;background:#ececec"></div>
<div class="a" style="left:34px;top:378px;width:211px;height:1.5px;background:#555"></div>
<div class="a" style="left:34px;top:399px;width:211px;height:1.5px;background:#555"></div>
<div class="a" style="left:34px;top:420px;width:211px;height:1.5px;background:#555"></div>
<div class="a" style="left:34px;top:441px;width:211px;height:1.5px;background:#555"></div>
<div class="a" style="left:34px;top:461px;width:211px;height:1.5px;background:#555"></div>
<div class="a" style="left:34px;top:482px;width:211px;height:1.5px;background:#555"></div>
<div class="a" style="left:34px;top:503px;width:211px;height:1.5px;background:#555"></div>
<div class="a" style="left:34px;top:524px;width:211px;height:1.5px;background:#555"></div>
<div class="a" style="left:34px;top:545px;width:211px;height:1.5px;background:#555"></div>
<div class="a" style="left:34px;top:565px;width:211px;height:1.5px;background:#555"></div>
<div class="a" style="left:34px;top:586px;width:211px;height:1.5px;background:#555"></div>
<div class="a" style="left:34px;top:607px;width:211px;height:1.5px;background:#555"></div>
<div class="a" style="left:34px;top:628px;width:211px;height:1.5px;background:#555"></div>
<div class="a" style="left:34px;top:649px;width:211px;height:1.5px;background:#555"></div>
<div class="a" style="left:34px;top:670px;width:211px;height:1.5px;background:#555"></div>
<div class="a" style="left:34px;top:669.9px;width:212px;height:2px;background:#1a1a1a"></div>
<div class="a" style="left:33.0px;top:378.3px;width:2px;height:292.9px;background:#2a2a2a"></div>
<div class="a" style="left:103.8px;top:378.3px;width:1.2px;height:292.9px;background:#2a2a2a"></div>
<div class="a" style="left:173.3px;top:378.3px;width:1.2px;height:292.9px;background:#2a2a2a"></div>
<div class="a" style="left:243.5px;top:378.3px;width:2px;height:292.9px;background:#2a2a2a"></div>
<div class="t" style="left:29px;top:382.5px;width:80px;text-align:center;font-size:14px;color:#a8323c">5차</div>
<div class="t" style="left:99.5px;top:382.5px;width:80px;text-align:center;font-size:14px;color:#a8323c">참여횟수</div>
<div class="t" style="left:170px;top:382.5px;width:80px;text-align:center;font-size:14px;color:#a8323c">불참횟수</div>
<svg class="a" style="left:63px;top:404.3px" width="12" height="12" viewBox="0 0 12 12"><circle cx="6" cy="6" r="3.8" fill="none" stroke="#333" stroke-width="1.9"/></svg>
<svg class="a" style="left:63px;top:425.1px" width="12" height="12" viewBox="0 0 12 12"><circle cx="6" cy="6" r="3.8" fill="none" stroke="#333" stroke-width="1.9"/></svg>
<svg class="a" style="left:63px;top:446.0px" width="12" height="12" viewBox="0 0 12 12"><circle cx="6" cy="6" r="3.8" fill="none" stroke="#333" stroke-width="1.9"/></svg>
<svg class="a" style="left:63px;top:466.8px" width="12" height="12" viewBox="0 0 12 12"><circle cx="6" cy="6" r="3.8" fill="none" stroke="#333" stroke-width="1.9"/></svg>
<svg class="a" style="left:63px;top:508.5px" width="12" height="12" viewBox="0 0 12 12"><circle cx="6" cy="6" r="3.8" fill="none" stroke="#333" stroke-width="1.9"/></svg>
<svg class="a" style="left:63px;top:529.4px" width="12" height="12" viewBox="0 0 12 12"><circle cx="6" cy="6" r="3.8" fill="none" stroke="#333" stroke-width="1.9"/></svg>
<svg class="a" style="left:63px;top:571.1px" width="12" height="12" viewBox="0 0 12 12"><circle cx="6" cy="6" r="3.8" fill="none" stroke="#333" stroke-width="1.9"/></svg>
<svg class="a" style="left:63px;top:591.9px" width="12" height="12" viewBox="0 0 12 12"><circle cx="6" cy="6" r="3.8" fill="none" stroke="#333" stroke-width="1.9"/></svg>
<svg class="a" style="left:63px;top:612.8px" width="12" height="12" viewBox="0 0 12 12"><circle cx="6" cy="6" r="3.8" fill="none" stroke="#333" stroke-width="1.9"/></svg>
<svg class="a" style="left:63px;top:633.6px" width="12" height="12" viewBox="0 0 12 12"><circle cx="6" cy="6" r="3.8" fill="none" stroke="#333" stroke-width="1.9"/></svg>
<svg class="a" style="left:63px;top:654.4px" width="12" height="12" viewBox="0 0 12 12"><circle cx="6" cy="6" r="3.8" fill="none" stroke="#333" stroke-width="1.9"/></svg>
<div class="a" style="left:33.3px;top:264px;width:1.5px;height:454px;background:#4a7566"></div>
<div class="a" style="left:34px;top:264px;width:561px;height:1.4px;background:repeating-linear-gradient(90deg,#6d8a82 0 5px,transparent 5px 8px)"></div>
<div class="a" style="left:580.5px;top:266px;width:1.2px;height:452px;background:repeating-linear-gradient(180deg,#6d8a82 0 5px,transparent 5px 8px)"></div>
<div class="a" style="left:600px;top:249.5px;width:58px;height:12.5px;background:#fff;border:1px solid #8a8a8a;border-radius:3px;box-shadow:0 1px 2px rgba(0,0,0,0.2)"></div>
<div class="t" style="transform:scaleX(0.8802);transform-origin:0 0;left:603px;top:251.5px;font-size:8.5px;color:#555">1048576R x 5C</div>
<div class="a" style="left:733px;top:243px;width:14px;height:475px;background:#f4f4f4"></div>
<div class="a" style="left:737px;top:254px;width:5.5px;height:250px;background:#7d7d7d;border-radius:3px"></div>
<svg class="a" style="left:736px;top:246px" width="8" height="6" viewBox="0 0 8 6"><path d="M0.5 5.5 L4 1 L7.5 5.5 Z" fill="#777"/></svg>
<div class="a" style="left:747px;top:175px;width:3px;height:543px;background:#262a28"></div><div class="a" style="left:750px;top:175px;width:1.2px;height:543px;background:#d6d6d6"></div>
<!-- ===== EDGE ===== -->
<div class="a" style="left:751px;top:175px;width:272px;height:543px;background:#fff"></div>
<div class="a" style="left:747px;top:97px;width:276px;height:27px;background:#2a2a2a;border-radius:6px 0 0 0"></div>
<div class="a" style="left:747px;top:124px;width:276px;height:51px;background:#3b3b3b"></div>
<svg class="a" style="left:758px;top:107px" width="13" height="12" viewBox="0 0 13 12" fill="none" stroke="#cfcfcf" stroke-width="1"><rect x="1" y="2" width="6" height="8" rx="2"/><rect x="3.5" y="1" width="6" height="9" rx="2" fill="#2a2a2a"/><rect x="6" y="2" width="6" height="9" rx="2" fill="#2a2a2a"/></svg>
<svg class="a" style="left:786px;top:107px" width="12" height="12" viewBox="0 0 12 12" fill="none" stroke="#dedede" stroke-width="1.2"><rect x="1" y="1" width="10" height="10" rx="2"/><path d="M1 4 H11 M4 4 V11"/></svg>
<div class="a" style="left:807px;top:103px;width:157px;height:22px;background:#3b3b3b;border-radius:6px 6px 0 0"></div>
<svg class="a" style="left:813px;top:107px" width="11" height="12" viewBox="0 0 11 12"><path d="M1 1 H7 L10 4 V11 H1 Z" fill="#e0e0e0"/><rect x="0" y="4" width="11" height="5" rx="1.5" fill="#d9383f"/><text x="1.2" y="8.2" font-size="3.6" fill="#fff" font-family="Liberation Sans" font-weight="bold">PDF</text></svg>
<div class="t" style="transform:scaleX(0.7749);transform-origin:0 0;left:831px;top:108px;font-size:10px;color:#dcdcdc">*컴활1급실기.pdf</div>
<svg class="a" style="left:949px;top:110px" width="8" height="8" viewBox="0 0 8 8"><path d="M0.5 0.5 L7.5 7.5 M7.5 0.5 L0.5 7.5" stroke="#cfcfcf" stroke-width="1.1"/></svg>
<svg class="a" style="left:969px;top:108px" width="11" height="11" viewBox="0 0 11 11"><path d="M5.5 0 V11 M0 5.5 H11" stroke="#d8d8d8" stroke-width="1.1"/></svg>
<svg class="a" style="left:760px;top:131px" width="12" height="11" viewBox="0 0 12 11"><path d="M11 5.5 H1.5 M5.5 1 L1 5.5 L5.5 10" fill="none" stroke="#777" stroke-width="1.1"/></svg>
<svg class="a" style="left:788px;top:130px" width="12" height="13" viewBox="0 0 12 13"><path d="M10.5 7 A4.6 4.6 0 1 1 8.5 2.8" fill="none" stroke="#d8d8d8" stroke-width="1.2"/><path d="M7 0.5 L10.5 1.5 L9.5 5" fill="none" stroke="#d8d8d8" stroke-width="1.2"/></svg>
<div class="a" style="left:813px;top:127px;width:215px;height:20px;background:#292929;border-radius:10px"></div>
<svg class="a" style="left:823px;top:131px" width="12" height="12" viewBox="0 0 12 12"><circle cx="6" cy="6" r="5.2" fill="none" stroke="#d0d0d0" stroke-width="1.1"/><path d="M6 5 V9" stroke="#d0d0d0" stroke-width="1.2"/><circle cx="6" cy="3.3" r="0.8" fill="#d0d0d0"/></svg>
<div class="t" style="transform:scaleX(0.8500);transform-origin:0 0;left:840px;top:131.5px;font-size:10px;color:#e2e2e2;font-weight:bold">파일</div>
<div class="a" style="left:865.5px;top:131px;width:1px;height:11px;background:#777"></div>
<div class="t" style="transform:scaleX(0.9157);transform-origin:0 0;left:874px;top:132px;font-size:10px;color:#e8e8e8">G:/내%20드라이브/이미남컴퓨터/...</div>
<svg class="a" style="left:758px;top:156px" width="12" height="10" viewBox="0 0 12 10" fill="#d8d8d8"><rect x="0" y="0.5" width="2" height="1.5"/><rect x="3" y="0.5" width="9" height="1.5"/><rect x="0" y="4.2" width="2" height="1.5"/><rect x="3" y="4.2" width="9" height="1.5"/><rect x="0" y="8" width="2" height="1.5"/><rect x="3" y="8" width="9" height="1.5"/></svg>
<div class="a" style="left:779px;top:154px;width:1px;height:14px;background:#606060"></div>
<div class="a" style="left:782px;top:151px;width:39px;height:21px;background:#4a4a4a;border-radius:3px"></div>
<div class="a" style="left:782px;top:170.5px;width:39px;height:1.5px;background:#6e9fd6"></div>
<svg class="a" style="left:787px;top:154px" width="12" height="14" viewBox="0 0 12 14"><path d="M1 1 H11 L9 6 L8 13 H4 L3 6 Z" fill="#f2f2f2"/><path d="M2 2 H10 L8.6 5 H3.4 Z M4 8 L8 7 V9 L4 10 Z" fill="#5fd35f"/></svg>
<svg class="a" style="left:804px;top:160px" width="7" height="5" viewBox="0 0 7 5"><path d="M1 1 L3.5 3.5 L6 1" fill="none" stroke="#aaa" stroke-width="1"/></svg>
<div class="a" style="left:828px;top:160px;width:2px;height:2px;background:#ddd;box-shadow:4px 0 0 #ddd,8px 0 0 #ddd"></div>
<div class="a" style="left:904.5px;top:161px;width:7px;height:1.2px;background:#cfcfcf"></div>
<svg class="a" style="left:927px;top:156px" width="10" height="11" viewBox="0 0 10 11"><path d="M5 0.5 V10.5 M0 5.5 H10" stroke="#dcdcdc" stroke-width="1.2"/></svg>
<svg class="a" style="left:949px;top:155px" width="13" height="12" viewBox="0 0 13 12" fill="none" stroke="#d8d8d8" stroke-width="1.1"><rect x="0.8" y="1.5" width="11.4" height="9" rx="2"/><path d="M3 6 H10 M3 6 L4.5 4.5 M3 6 L4.5 7.5 M10 6 L8.5 4.5 M10 6 L8.5 7.5"/></svg>
<div class="a" style="left:969px;top:154px;width:1px;height:14px;background:#606060"></div>
<div class="a" style="left:973px;top:151px;width:27px;height:21px;border:1px solid #5e5e5e;border-radius:3px;background:#353535"></div>
<div class="t" style="left:983px;top:156px;font-size:10px;color:#ddd">1</div>
<div class="t" style="left:1006px;top:156px;font-size:10px;color:#ddd;font-weight:bold">의 12</div>

<div class="a" style="left:751.2px;top:175px;width:1.4px;height:543px;background:#3a3a3a"></div>

<svg class="a" style="left:795px;top:175px" width="70" height="53" viewBox="0 0 70 53">
<path d="M26.5 10.5 L20.5 30 L31 32.5 Z M44 10.5 L50 30 L40.5 32.5 Z" fill="#f2b33d"/>
<path d="M22 -4 V10.5 H48 V-4" fill="#fff" stroke="#1a1a1a" stroke-width="2" stroke-linejoin="round"/>
<path d="M27 -4 V6 H43 V-4" fill="none" stroke="#1a1a1a" stroke-width="2" stroke-linejoin="round"/>
<circle cx="35" cy="-1.5" r="5.2" fill="#fff" stroke="#1a1a1a" stroke-width="2"/>
<path d="M31.5 6 L35 9.5 L38.5 6" fill="none" stroke="#1a1a1a" stroke-width="1.6"/>
<path d="M31 10.5 V36 Q31 38 33 38 H34 Q36 38 36 36 V24 M36 36 Q36 38 38 38 H39 Q41 38 41 36 V10.5" fill="#fff" stroke="#1a1a1a" stroke-width="2" stroke-linejoin="round"/>
<path d="M31 20 H41 M31 21 L36 24.5 L41 21" fill="none" stroke="#1a1a1a" stroke-width="1.6"/>
<path d="M47 17 H60.5 Q64 17 64 13.5 Q64 9.5 60 9.5 Q59 3 53 3 Q48.5 3 47.5 7" fill="#fff" stroke="#1a1a1a" stroke-width="2"/>
<path d="M10 49.5 H28 Q31 49.5 31 46 Q31 42 27 42 Q26 35.5 19.5 35.5 Q14 35.5 12.5 41 Q8 41 8 45.5 Q8 49.5 10 49.5 Z" fill="#fff" stroke="#1a1a1a" stroke-width="2"/>
</svg>
<div class="a" style="left:768px;top:227.5px;width:33px;height:2.2px;background:#111"></div>
<div class="a" style="left:766px;top:245.5px;width:36px;height:19px;background:#e5878e"></div>
<div class="t" style="transform:scaleX(1.1749);transform-origin:0 0;left:776.5px;top:249px;font-size:13px;color:#fff">01</div>
<div class="a" style="left:783px;top:270.5px;width:19px;height:13px;background:#acf0a4;filter:blur(0.6px)"></div>
<div class="a" style="left:765.8px;top:271.9px;width:9.4px;height:9.4px;border:2px solid #111;background:#fff;border-radius:1px"></div>
<div class="t" style="left:768.3px;top:272.7px;font-size:7.5px;color:#111;font-weight:bold">1</div>
<div class="a" style="left:776.5px;top:279.5px;width:1.6px;height:1.6px;background:#111"></div>
<div class="t" style="left:784px;top:270.7px;font-size:11px;color:#111;font-weight:bold">반창</div>
<div class="a" style="left:784px;top:379.0px;width:18px;height:6px;background:#8fe58a;border-radius:0 0 0 6px"></div>
<div class="a" style="left:765.8px;top:368.9px;width:9.4px;height:9.4px;border:2px solid #111;background:#fff;border-radius:1px"></div>
<div class="t" style="left:768.3px;top:369.7px;font-size:7.5px;color:#111;font-weight:bold">2</div>
<div class="a" style="left:776.5px;top:376.5px;width:1.6px;height:1.6px;background:#111"></div>
<div class="t" style="left:784px;top:367.7px;font-size:11px;color:#111;font-weight:bold">내기</div>
<div class="a" style="left:765.8px;top:531.4px;width:9.4px;height:9.4px;border:2px solid #111;background:#fff;border-radius:1px"></div>
<div class="t" style="left:768.3px;top:532.2px;font-size:7.5px;color:#111;font-weight:bold">3</div>
<div class="a" style="left:776.5px;top:539px;width:1.6px;height:1.6px;background:#111"></div>
<div class="t" style="left:784px;top:530.2px;font-size:11px;color:#111;font-weight:bold">기본</div>
<svg class="a" style="left:781.5px;top:292.2px" width="5.5" height="6.6" viewBox="0 0 5.5 6.6"><path d="M0 0 L5.5 3.3 L0 6.6 Z" fill="#111"/></svg>
<div class="t" style="left:793.0px;top:290.0px;font-size:10px;color:#555">아</div>
<svg class="a" style="left:781.5px;top:389.7px" width="5.5" height="6.6" viewBox="0 0 5.5 6.6"><path d="M0 0 L5.5 3.3 L0 6.6 Z" fill="#111"/></svg>
<div class="t" style="left:793.0px;top:387.5px;font-size:10px;color:#555">예</div>
<svg class="a" style="left:781.5px;top:406.4px" width="5.5" height="6.6" viewBox="0 0 5.5 6.6"><path d="M0 0 L5.5 3.3 L0 6.6 Z" fill="#111"/></svg>
<div class="t" style="left:793.0px;top:404.2px;font-size:10px;color:#555">우</div>
<div class="t" style="left:794.5px;top:422px;font-size:10px;color:#555">한</div>
<svg class="a" style="left:781.5px;top:441.2px" width="5.5" height="6.6" viewBox="0 0 5.5 6.6"><path d="M0 0 L5.5 3.3 L0 6.6 Z" fill="#111"/></svg>
<div class="t" style="left:793.0px;top:439.0px;font-size:10px;color:#555">CC</div>
<svg class="a" style="left:781.5px;top:551.4000000000001px" width="5.5" height="6.6" viewBox="0 0 5.5 6.6"><path d="M0 0 L5.5 3.3 L0 6.6 Z" fill="#111"/></svg>
<div class="t" style="left:793.0px;top:549.2px;font-size:10px;color:#555">예</div>
<svg class="a" style="left:781.5px;top:568.4000000000001px" width="5.5" height="6.6" viewBox="0 0 5.5 6.6"><path d="M0 0 L5.5 3.3 L0 6.6 Z" fill="#111"/></svg>
<div class="t" style="left:793.0px;top:566.2px;font-size:10px;color:#555">SU</div>
<svg class="a" style="left:781.5px;top:585.7px" width="5.5" height="6.6" viewBox="0 0 5.5 6.6"><path d="M0 0 L5.5 3.3 L0 6.6 Z" fill="#111"/></svg>
<div class="t" style="left:793.0px;top:583.5px;font-size:10px;color:#555">절</div>

<!-- ===== SMALL EXCEL ===== -->
<div class="a" style="left:800px;top:225.5px;width:230px;height:500px;background:#f3f3f3;border:1px solid #bdbdbd;border-radius:6px 0 0 0;box-shadow:-2px 0 6px rgba(0,0,0,0.15)"></div>
<svg class="a" style="left:811px;top:236px" width="12" height="11" viewBox="0 0 12 11"><rect x="3" y="0" width="9" height="11" rx="1" fill="#1f9d55"/><rect x="7" y="0" width="5" height="11" fill="#37c27a"/><rect x="0" y="2" width="7" height="7" rx="1" fill="#107c41"/><text x="1.3" y="7.8" font-size="6" fill="#fff" font-family="Liberation Sans" font-weight="bold">x</text></svg>
<svg class="a" style="left:832px;top:236px" width="11" height="11" viewBox="0 0 11 11" fill="none" stroke="#bdbdbd" stroke-width="1"><rect x="0.5" y="0.5" width="10" height="10" rx="1"/><rect x="3" y="0.5" width="5" height="3"/><rect x="2.5" y="6" width="6" height="4.5"/></svg>
<svg class="a" style="left:851px;top:236px" width="12" height="11" viewBox="0 0 12 11"><path d="M2 1 L2 5 L6 5 M2 5 C4 1 11 2 10 7 C9 9 7 10 6 10" fill="none" stroke="#b8b8b8" stroke-width="1.1"/></svg>
<svg class="a" style="left:864px;top:240px" width="6" height="4" viewBox="0 0 6 4"><path d="M1 1 L3 3 L5 1" fill="none" stroke="#c0c0c0"/></svg>
<svg class="a" style="left:876px;top:236px" width="12" height="11" viewBox="0 0 12 11"><path d="M10 1 L10 5 L6 5 M10 5 C8 1 1 2 2 7 C3 9 5 10 6 10" fill="none" stroke="#b8b8b8" stroke-width="1.1"/></svg>
<svg class="a" style="left:889px;top:240px" width="6" height="4" viewBox="0 0 6 4"><path d="M1 1 L3 3 L5 1" fill="none" stroke="#c0c0c0"/></svg>
<svg class="a" style="left:901px;top:238px" width="7" height="7" viewBox="0 0 7 7"><path d="M1 1 H6 M1.5 3.5 L3.5 5.5 L5.5 3.5" fill="none" stroke="#b0b0b0" stroke-width="1"/></svg>
<div class="t" style="transform:scaleX(0.7904);transform-origin:0 0;left:920px;top:237px;font-size:9.5px;color:#b8b8b8">통합 문서2&nbsp;&nbsp;-&nbsp;&nbsp;E...</div>
<div class="a" style="left:1000px;top:232px;width:40px;height:20px;background:#fbfbfb;border:1px solid #dedede;border-radius:4px"></div>
<svg class="a" style="left:1011px;top:236px" width="12" height="12" viewBox="0 0 12 12"><circle cx="7" cy="5" r="3.6" fill="none" stroke="#bbb" stroke-width="1.1"/><path d="M4.3 7.7 L1 11" stroke="#bbb" stroke-width="1.2"/></svg>
<div class="t" style="transform:scaleX(0.9444);transform-origin:0 0;left:812px;top:263px;font-size:9px;color:#2e2e2e;font-weight:bold">파일</div>
<div class="t" style="transform:scaleX(0.8889);transform-origin:0 0;left:845px;top:263px;font-size:9px;color:#2e2e2e;font-weight:bold">홈</div>
<div class="t" style="transform:scaleX(0.8333);transform-origin:0 0;left:867px;top:263px;font-size:9px;color:#2e2e2e;font-weight:bold">삽입</div>
<div class="t" style="transform:scaleX(0.9463);transform-origin:0 0;left:895px;top:263px;font-size:9px;color:#2e2e2e;font-weight:bold">페이지 레이아웃</div>
<div class="t" style="transform:scaleX(0.8889);transform-origin:0 0;left:970px;top:263px;font-size:9px;color:#2e2e2e;font-weight:bold">수식</div>
<div class="t" style="transform:scaleX(0.9259);transform-origin:0 0;left:999px;top:263px;font-size:9px;color:#2e2e2e;font-weight:bold">데이터</div>
<div class="a" style="left:845px;top:273.5px;width:9px;height:2px;background:#1e7145"></div>
<div class="a" style="left:806px;top:278px;width:230px;height:64.5px;background:#fbfbfb;border-radius:6px;box-shadow:0 1px 1px rgba(0,0,0,0.12)"></div>
<svg class="a" style="left:822px;top:284px" width="20" height="21" viewBox="0 0 20 21"><rect x="1" y="3" width="12" height="15" rx="1" fill="#f2f2f2" stroke="#c4c4c4"/><rect x="4" y="1" width="6" height="4" rx="1" fill="#f2f2f2" stroke="#c4c4c4"/><rect x="8" y="8" width="10" height="12" rx="1" fill="#f6f6f6" stroke="#c4c4c4"/></svg>
<div class="t" style="transform:scaleX(0.8611);transform-origin:0 0;left:815px;top:305px;font-size:8.5px;color:#bcbcbc">붙여넣기</div>
<svg class="a" style="left:829px;top:317px" width="6" height="4" viewBox="0 0 6 4"><path d="M1 1 L3 3 L5 1" fill="none" stroke="#c0c0c0"/></svg>
<svg class="a" style="left:851px;top:284px" width="9" height="11" viewBox="0 0 9 11"><path d="M2 1 L6 7 M7 1 L3 7" stroke="#555" stroke-width="1"/><circle cx="2.5" cy="8.5" r="1.8" fill="none" stroke="#3a7fc8" stroke-width="1.1"/><circle cx="6.5" cy="8.5" r="1.8" fill="none" stroke="#3a7fc8" stroke-width="1.1"/></svg>
<svg class="a" style="left:851px;top:298px" width="12" height="12" viewBox="0 0 12 12"><rect x="1" y="1" width="6" height="8" rx="1" fill="none" stroke="#444"/><rect x="4" y="3" width="6" height="8" rx="1" fill="#fbfbfb" stroke="#444"/></svg>
<svg class="a" style="left:866px;top:302px" width="6" height="4" viewBox="0 0 6 4"><path d="M0.5 0.5 L3 3 L5.5 0.5" fill="#333"/></svg>
<svg class="a" style="left:851px;top:312px" width="12" height="11" viewBox="0 0 12 11"><path d="M1 9 L6 4 L9 7 L4 10 Z" fill="#f0a640" stroke="#c77a20"/><path d="M7 4 L11 1" stroke="#444" stroke-width="1.6"/></svg>
<div class="t" style="transform:scaleX(0.8333);transform-origin:0 0;left:824px;top:331px;font-size:9px;color:#333;font-weight:bold">클립보드</div>
<svg class="a" style="left:873px;top:333px" width="7" height="7" viewBox="0 0 7 7"><path d="M0.5 0.5 H4 M0.5 0.5 V4 M2 2 L6 6 M6 3 V6 H3" fill="none" stroke="#777" stroke-width="0.9"/></svg>
<div class="a" style="left:880px;top:283px;width:1px;height:55px;background:#dcdcdc"></div>
<div class="t" style="transform:scaleX(1.1765);transform-origin:0 0;left:888px;top:281px;font-size:17px;color:#555">가</div>
<div class="a" style="left:888px;top:296.5px;width:21px;height:4px;background:#222"></div>
<div class="t" style="transform:scaleX(0.7778);transform-origin:0 0;left:891px;top:304px;font-size:9px;color:#333">글꼴</div>
<svg class="a" style="left:896px;top:316px" width="6" height="4" viewBox="0 0 6 4"><path d="M1 1 L3 3 L5 1" fill="none" stroke="#555"/></svg>
<div class="a" style="left:915px;top:283px;width:1px;height:55px;background:#dcdcdc"></div>
<svg class="a" style="left:924px;top:284px" width="19" height="14" viewBox="0 0 19 14" stroke="#555" stroke-width="1"><path d="M1 1 H18 M3 4.5 H16 M1 8 H18 M3 11.5 H16"/></svg>
<div class="t" style="transform:scaleX(0.8333);transform-origin:0 0;left:926px;top:304px;font-size:9px;color:#333">맞춤</div>
<svg class="a" style="left:931px;top:316px" width="6" height="4" viewBox="0 0 6 4"><path d="M1 1 L3 3 L5 1" fill="none" stroke="#555"/></svg>
<div class="a" style="left:952px;top:283px;width:1px;height:55px;background:#dcdcdc"></div>
<div class="t" style="left:960px;top:281px;font-size:18px;color:#444">%</div>
<div class="t" style="transform:scaleX(0.7778);transform-origin:0 0;left:963px;top:303px;font-size:9px;color:#333;line-height:1.2">표시</div>
<div class="t" style="transform:scaleX(0.8150);transform-origin:0 0;left:960px;top:314px;font-size:9px;color:#333">형식 ˅</div>
<div class="a" style="left:988px;top:283px;width:1px;height:55px;background:#dcdcdc"></div>
<svg class="a" style="left:995px;top:284px" width="11" height="43" viewBox="0 0 11 43" fill="none"><rect x="0.5" y="0.5" width="10" height="9" stroke="#555"/><path d="M0.5 3.5 H10.5 M0.5 6.5 H10.5 M4 0.5 V9.5 M7 0.5 V9.5" stroke="#d04040"/><rect x="0.5" y="16.5" width="10" height="9" stroke="#555"/><path d="M3 25 L10 18" stroke="#3a7fc8" stroke-width="1.6"/><rect x="0.5" y="33" width="10" height="9" stroke="#555"/><path d="M2 42 L10 34" stroke="#3a7fc8" stroke-width="2.2"/></svg>
<div class="t" style="left:1008px;top:285px;font-size:9px;color:#333">조건</div>
<div class="t" style="left:1008px;top:301px;font-size:9px;color:#333">표 서</div>
<div class="t" style="left:1008px;top:318px;font-size:9px;color:#333">셀 스</div>
<div class="t" style="left:1015px;top:331px;font-size:9px;color:#333;font-weight:bold">스</div>
<div class="a" style="left:806px;top:349px;width:66px;height:16px;background:#fff;border-radius:3px"></div>
<div class="t" style="left:811px;top:352px;font-size:10px;color:#333">E9</div>
<svg class="a" style="left:860px;top:355px" width="8" height="5" viewBox="0 0 8 5"><path d="M1 1 L4 4 L7 1" fill="none" stroke="#444" stroke-width="1.1"/></svg>
<div class="a" style="left:877px;top:352.5px;width:2px;height:2px;background:#555;box-shadow:0 3px 0 #555,0 6px 0 #555"></div>
<div class="a" style="left:884px;top:349px;width:38px;height:16px;background:#fff;border-radius:3px"></div>
<svg class="a" style="left:888px;top:353px" width="9" height="9" viewBox="0 0 9 9"><path d="M1 1 L8 8 M8 1 L1 8" stroke="#c4c4c4" stroke-width="1.1"/></svg>
<svg class="a" style="left:899px;top:353px" width="11" height="9" viewBox="0 0 11 9"><path d="M1 5 L4 8 L10 1" fill="none" stroke="#c4c4c4" stroke-width="1.1"/></svg>
<div class="t" style="left:911px;top:351px;font-size:10.5px;color:#333;font-family:'Liberation Serif',serif;font-style:italic">fx</div>
<div class="a" style="left:927px;top:349px;width:110px;height:16px;background:#fff;border-radius:3px"></div>
<div class="a" style="left:801px;top:373.6px;width:230px;height:19.4px;background:#efefef"></div>
<svg class="a" style="left:812px;top:377px" width="17" height="15" viewBox="0 0 17 15"><path d="M16 1 V14 H1 Z" fill="#d9d9d9"/></svg>
<div class="a" style="left:801px;top:393px;width:29px;height:305px;background:#ececec"></div>
<div class="a" style="left:830px;top:393px;width:200px;height:305px;background:#fff"></div>
<div class="a" style="left:801px;top:392.5px;width:230px;height:1px;background:#d6d6d6"></div>
<div class="a" style="left:830px;top:378px;width:1px;height:320px;background:#dedede"></div>
<div class="a" style="left:906px;top:378px;width:1px;height:320px;background:#dedede"></div>
<div class="a" style="left:1004px;top:378px;width:1px;height:320px;background:#dedede"></div>
<div class="t" style="left:864px;top:378.5px;font-size:11.5px;color:#444">C</div>
<div class="t" style="left:951.5px;top:378.5px;font-size:11.5px;color:#444">D</div>
<div class="a" style="left:801px;top:415.4px;width:230px;height:1px;background:#e2e2e2"></div>
<div class="t" style="left:801px;top:398.5px;width:29px;text-align:center;font-size:12px;color:#444">1</div>
<div class="a" style="left:801px;top:438.3px;width:230px;height:1px;background:#e2e2e2"></div>
<div class="t" style="left:801px;top:421.4px;width:29px;text-align:center;font-size:12px;color:#444">2</div>
<div class="a" style="left:801px;top:461.2px;width:230px;height:1px;background:#e2e2e2"></div>
<div class="t" style="left:801px;top:444.3px;width:29px;text-align:center;font-size:12px;color:#444">3</div>
<div class="a" style="left:801px;top:484.1px;width:230px;height:1px;background:#e2e2e2"></div>
<div class="t" style="left:801px;top:467.2px;width:29px;text-align:center;font-size:12px;color:#444">4</div>
<div class="a" style="left:801px;top:507.0px;width:230px;height:1px;background:#e2e2e2"></div>
<div class="t" style="left:801px;top:490.1px;width:29px;text-align:center;font-size:12px;color:#444">5</div>
<div class="a" style="left:801px;top:529.9px;width:230px;height:1px;background:#e2e2e2"></div>
<div class="t" style="left:801px;top:513.0px;width:29px;text-align:center;font-size:12px;color:#444">6</div>
<div class="a" style="left:801px;top:552.8px;width:230px;height:1px;background:#e2e2e2"></div>
<div class="t" style="left:801px;top:535.9px;width:29px;text-align:center;font-size:12px;color:#444">7</div>
<div class="a" style="left:801px;top:575.7px;width:230px;height:1px;background:#e2e2e2"></div>
<div class="t" style="left:801px;top:558.8px;width:29px;text-align:center;font-size:12px;color:#444">8</div>
<div class="a" style="left:801px;top:598.6px;width:230px;height:1px;background:#e2e2e2"></div>
<div class="t" style="left:801px;top:581.7px;width:29px;text-align:center;font-size:12px;color:#444">9</div>
<div class="a" style="left:801px;top:621.5px;width:230px;height:1px;background:#e2e2e2"></div>
<div class="t" style="left:801px;top:604.6px;width:29px;text-align:center;font-size:12px;color:#444">10</div>
<div class="a" style="left:801px;top:644.4px;width:230px;height:1px;background:#e2e2e2"></div>
<div class="t" style="left:801px;top:627.5px;width:29px;text-align:center;font-size:12px;color:#444">11</div>
<div class="a" style="left:801px;top:667.3px;width:230px;height:1px;background:#e2e2e2"></div>
<div class="t" style="left:801px;top:650.4px;width:29px;text-align:center;font-size:12px;color:#444">12</div>
<div class="a" style="left:801px;top:690.2px;width:230px;height:1px;background:#e2e2e2"></div>
<div class="t" style="left:801px;top:673.3px;width:29px;text-align:center;font-size:12px;color:#444">13</div>
<div class="a" style="left:801px;top:713.1px;width:230px;height:1px;background:#e2e2e2"></div>
<div class="t" style="left:801px;top:696.2px;width:29px;text-align:center;font-size:12px;color:#444">14</div>
<div class="t" style="left:880px;top:443.3px;width:23px;text-align:right;font-size:14.5px;color:#222">1</div>
<div class="t" style="transform:scaleX(1.0409);transform-origin:0 0;left:910px;top:443.3px;font-size:14.5px;color:#222">col(column)</div>
<div class="t" style="left:1008px;top:442.8px;font-size:15px;color:#222">열</div>
<div class="t" style="left:880px;top:466.2px;width:23px;text-align:right;font-size:14.5px;color:#222">2</div>
<div class="t" style="left:910px;top:466.2px;font-size:14.5px;color:#222">row</div>
<div class="t" style="left:1008px;top:465.7px;font-size:15px;color:#222">행</div>
<div class="t" style="left:910px;top:489.1px;font-size:14.5px;color:#222">number</div>
<div class="t" style="left:1008px;top:488.6px;font-size:15px;color:#222">숫</div>
<div class="t" style="left:910px;top:512.0px;font-size:14.5px;color:#222">ref</div>
<div class="t" style="left:1008px;top:511.5px;font-size:15px;color:#222">범</div>
<div class="t" style="left:910px;top:534.9px;font-size:14.5px;color:#222">range</div>
<div class="t" style="left:1008px;top:534.4px;font-size:15px;color:#222">범</div>
<div class="t" style="left:910px;top:557.8px;font-size:14.5px;color:#222">array</div>
<div class="t" style="left:1008px;top:557.3px;font-size:15px;color:#222">범</div>
<div class="a" style="left:801px;top:698.4px;width:230px;height:20px;background:#efefef"></div>
<svg class="a" style="left:818px;top:704px" width="6" height="9" viewBox="0 0 6 9"><path d="M5 1 L1 4.5 L5 8" fill="none" stroke="#999" stroke-width="1"/></svg>
<svg class="a" style="left:840px;top:704px" width="6" height="9" viewBox="0 0 6 9"><path d="M1 1 L5 4.5 L1 8" fill="none" stroke="#999" stroke-width="1"/></svg>
<div class="a" style="left:877px;top:698px;width:39px;height:20px;background:#fafafa;border-radius:0 0 4px 4px"></div>
<div class="t" style="transform:scaleX(0.8517);transform-origin:0 0;left:882px;top:704px;font-size:10px;color:#333">Sheet1</div>
<div class="a" style="left:881.5px;top:713px;width:29px;height:1.5px;background:#2d7d4f"></div>
<div class="a" style="left:918.5px;top:703px;width:1px;height:13px;background:#cfcfcf"></div>
<svg class="a" style="left:945px;top:703px" width="10" height="10" viewBox="0 0 10 10"><path d="M5 0.5 V9.5 M0.5 5 H9.5" stroke="#555" stroke-width="1"/></svg>
<!-- ===== HANGUL ===== -->
<div class="a" style="left:1023px;top:0;width:870px;height:718px;background:#ececec"></div>
<div class="a" style="left:1023px;top:0;width:870px;height:98px;background:linear-gradient(#fefefe,#f7f7f7)"></div>
<div class="a" style="left:1023px;top:98px;width:870px;height:1px;background:#dedede"></div>
<div class="a" style="left:1023px;top:99px;width:870px;height:30px;background:#f8f8f8"></div>
<div class="a" style="left:1023px;top:129px;width:870px;height:1px;background:#c6c6c6"></div>
<div class="a" style="left:1023px;top:130px;width:870px;height:510px;background:#dcdcdc"></div>
<div class="a" style="left:1023px;top:130px;width:6px;height:546px;background:#f3f3f3"></div>
<div class="a" style="left:1029px;top:130px;width:1px;height:546px;background:#bdbdbd"></div>
<div class="a" style="left:1023px;top:0;width:1px;height:708px;background:#8a8a8a"></div>
<svg class="a" style="left:1055px;top:0px" width="40" height="45" viewBox="1055 0 40 45">
<path d="M1065.3 6.5 L1067.6 7.5 L1078.6 27.5 L1075.6 29 Z M1082.7 6.5 L1080.4 7.5 L1069.4 27.5 L1072.4 29 Z" fill="#c8c8c8"/>
<path d="M1074 24 L1067.5 30 M1074 24 L1080.5 30" stroke="#c8c8c8" stroke-width="3"/>
<circle cx="1065.5" cy="33.5" r="4.2" fill="none" stroke="#c8c8c8" stroke-width="2.8"/><circle cx="1082.5" cy="33.5" r="4.2" fill="none" stroke="#c8c8c8" stroke-width="2.8"/>
</svg>
<div class="t" style="transform:scaleX(0.9000);transform-origin:0 0;left:1060px;top:47px;font-size:15px;color:#bdbdbd">오려</div>
<div class="t" style="transform:scaleX(0.9000);transform-origin:0 0;left:1060px;top:66.5px;font-size:15px;color:#bdbdbd">두기</div>
<svg class="a" style="left:1115px;top:7px" width="33" height="32" viewBox="0 0 33 32"><rect x="1" y="1" width="21" height="25" rx="2" fill="#fafafa" stroke="#d2d2d2" stroke-width="1.5"/><path d="M5 7 H12 M5 11 H12 M5 15 H12 M5 19 H12" stroke="#dcdcdc"/><rect x="11" y="6" width="21" height="25" rx="2" fill="#fcfcfc" stroke="#cfcfcf" stroke-width="1.5"/><path d="M15 12 H28 M15 16 H28 M15 20 H28 M15 24 H28" stroke="#d0d0d0" stroke-width="1.2"/></svg>
<div class="t" style="transform:scaleX(0.9000);transform-origin:0 0;left:1103px;top:47px;font-size:15px;color:#bdbdbd">복사하기</div>
<svg class="a" style="left:1178px;top:5px" width="32" height="34" viewBox="0 0 32 34"><rect x="1" y="4.5" width="21" height="24.5" rx="2" fill="#dfbd70" stroke="#8f7a4a" stroke-width="1.1"/><path d="M8 6.5 Q8 1.2 12 1.2 Q16 1.2 16 6.5" fill="none" stroke="#7b6a46" stroke-width="1.8"/><rect x="10" y="8.5" width="21" height="24.5" rx="2" fill="#fff" stroke="#666" stroke-width="1.6"/><path d="M14.5 15.5 H26.5 M14.5 19.5 H26.5 M14.5 23.5 H26.5 M14.5 27.5 H26.5" stroke="#6a6a6a" stroke-width="1.3"/></svg>
<div class="t" style="transform:scaleX(0.9111);transform-origin:0 0;left:1173px;top:47px;font-size:15px;color:#222">붙이기</div>
<svg class="a" style="left:1190px;top:74.0px" width="8" height="4" viewBox="0 0 8 4"><path d="M0 0 H8 L4 4 Z" fill="#333"/></svg>
<svg class="a" style="left:1229px;top:7px" width="34" height="31" viewBox="0 0 34 31"><rect x="1" y="1" width="23" height="28" rx="2" fill="#fdfdfd" stroke="#6a6a6a" stroke-width="1.5"/><path d="M5 7 H19 M5 11 H19 M5 15 H19" stroke="#555" stroke-width="1.2"/><path d="M5 19 H15 M5 23 H12" stroke="#5b7cc8" stroke-width="1.3"/><path d="M12.5 26.5 L23 15.5" stroke="#333" stroke-width="4.2" stroke-linecap="round"/><path d="M12.8 26 L22.5 16" stroke="#5a7cc8" stroke-width="2.2" stroke-linecap="round"/><path d="M21 14.5 L27.5 21" stroke="#444" stroke-width="2.4"/><circle cx="27.5" cy="10" r="4.2" fill="#555"/><path d="M23 14 L26.5 10.5" stroke="#555" stroke-width="3.4"/></svg>
<div class="t" style="transform:scaleX(0.9333);transform-origin:0 0;left:1230px;top:47px;font-size:15px;color:#222">모양</div>
<div class="t" style="transform:scaleX(0.9333);transform-origin:0 0;left:1230px;top:66.5px;font-size:15px;color:#222">복사</div>
<div class="a" style="left:1274px;top:1px;width:1px;height:87px;background:#d8d8d8"></div>
<svg class="a" style="left:1285px;top:0px" width="140" height="45" viewBox="1285 0 140 45" fill="none" stroke-linecap="round">
<path d="M1292.8 10.8 H1299.8 Q1298 17 1292.3 20.5" stroke="#8f8f8f" stroke-width="2.1"/>
<path d="M1304.3 9.3 V19.5 M1304.5 14.8 H1308" stroke="#8f8f8f" stroke-width="2.1"/>
<path d="M1301 20.6 H1308.6 Q1306 28 1298.4 31.5" stroke="#5470b8" stroke-width="3"/>
<path d="M1314.3 17.6 L1311.6 36 M1313.2 25.6 H1318" stroke="#5470b8" stroke-width="3"/>
<path d="M1333 11 H1357.5 M1333 14.8 H1347.5 M1333 18.5 H1357.5 M1333 22.2 H1347.5 M1333 26 H1351 M1333 29.8 H1342" stroke="#8a8a8a" stroke-width="1.3"/>
<path d="M1346 32 L1352.5 38.5 L1364.5 25.5" stroke="#5470b8" stroke-width="3.4" stroke-linecap="square"/>
<path d="M1384.5 21.5 L1390.2 8.5 L1396 21.5 M1386.6 17 H1394" stroke="#8f8f8f" stroke-width="2"/>
<path d="M1395 8.5 H1414 M1397 13.5 H1414 M1399.5 18.5 H1414" stroke="#8a8a8a" stroke-width="1.3"/>
<path d="M1384 26 H1405 M1384 31 H1402.5 M1384 36 H1399.5" stroke="#5b7cc8" stroke-width="1.5"/>
<path d="M1402 37.5 L1413 23.5 L1413.5 37.5 M1405.5 33 H1413" stroke="#5470b8" stroke-width="2.6" stroke-linecap="butt"/>
</svg>
<div class="t" style="transform:scaleX(0.9167);transform-origin:0 0;left:1291px;top:47px;font-size:15px;color:#222">글자</div>
<div class="t" style="transform:scaleX(0.9167);transform-origin:0 0;left:1291px;top:66.5px;font-size:15px;color:#222">모양</div>

<div class="t" style="transform:scaleX(0.9000);transform-origin:0 0;left:1335px;top:47px;font-size:15px;color:#222">문단</div>
<div class="t" style="transform:scaleX(0.9000);transform-origin:0 0;left:1335px;top:66.5px;font-size:15px;color:#222">모양</div>

<div class="t" style="transform:scaleX(0.8889);transform-origin:0 0;left:1379px;top:47px;font-size:15px;color:#222">스타일</div>
<svg class="a" style="left:1395px;top:74.0px" width="8" height="4" viewBox="0 0 8 4"><path d="M0 0 H8 L4 4 Z" fill="#333"/></svg>
<div class="a" style="left:1435.5px;top:1px;width:1px;height:87px;background:#d8d8d8"></div>
<div class="a" style="left:1444px;top:0px;width:44px;height:90px;background:#dbe3f5;border:1px solid #a3b8e6;border-radius:3px"></div>
<svg class="a" style="left:1453px;top:8px" width="26" height="31" viewBox="0 0 26 31"><rect x="1" y="1" width="24" height="29" rx="2" fill="#f8f8f8" stroke="#666" stroke-width="1.6"/><path d="M6 7 H20 M6 11 H20 M6 15 H20 M6 19 H20 M6 23 H20" stroke="#777" stroke-width="1.3"/></svg>
<div class="t" style="transform:scaleX(0.9333);transform-origin:0 0;left:1452px;top:47px;font-size:15px;color:#3b57a6">세로</div>
<svg class="a" style="left:1495px;top:12px" width="30" height="24" viewBox="0 0 30 24"><rect x="1" y="1" width="28" height="22" rx="2" fill="#fafafa" stroke="#666" stroke-width="1.6"/><path d="M6 7 H24 M6 11 H24 M6 15 H24 M6 19 H24" stroke="#777" stroke-width="1.2"/></svg>
<div class="t" style="transform:scaleX(0.9000);transform-origin:0 0;left:1496px;top:47px;font-size:15px;color:#222">가로</div>
<svg class="a" style="left:1545px;top:8px" width="26" height="30" viewBox="0 0 26 30"><rect x="1" y="1" width="24" height="28" rx="2" fill="#fafafa" stroke="#888" stroke-width="1.5"/><path d="M6 1 V29 M20 1 V29 M1 6 H25 M1 24 H25" stroke="#d0545a" stroke-width="1.3"/></svg>
<div class="t" style="transform:scaleX(0.8667);transform-origin:0 0;left:1551px;top:47px;font-size:15px;color:#222">쪽</div>
<div class="t" style="transform:scaleX(0.8667);transform-origin:0 0;left:1544px;top:66.5px;font-size:15px;color:#222">여백</div>
<svg class="a" style="left:1573px;top:74.0px" width="8" height="4" viewBox="0 0 8 4"><path d="M0 0 H8 L4 4 Z" fill="#333"/></svg>
<svg class="a" style="left:1595px;top:5px" width="35" height="35" viewBox="1595 5 35 35" fill="none" stroke-width="1.5">
<path d="M1599 37 V10.8 Q1599 8.8 1601 8.8 H1611.5 V37 M1599 25 H1611.5 M1602.3 11.8 H1608.6 V22 H1602.3 Z M1602.3 37 V28 H1608.6 V37" stroke="#6e6e6e"/>
<path d="M1611.5 8.8 H1622 Q1624 8.8 1624 10.8 V37 M1611.5 25 H1624 M1614.6 11.8 H1621 V22 H1614.6 Z M1614.6 37 V28 H1621 V37" stroke="#cc4a50"/>
</svg>
<div class="t" style="transform:scaleX(0.9333);transform-origin:0 0;left:1591px;top:47px;font-size:15px;color:#222">바탕쪽</div>
<svg class="a" style="left:1645px;top:5px" width="35" height="32" viewBox="1645 5 35 32" stroke-width="1.4"><path d="M1647 10 H1661 M1663.2 10 H1677 M1647 13.8 H1661 M1663.2 13.8 H1677 M1647 25 H1661 M1663.2 25 H1677 M1647 28.7 H1661 M1663.2 28.7 H1677" stroke="#8a8a8a"/><path d="M1647 17.5 H1661 M1663.2 17.5 H1677 M1647 21.3 H1661 M1663.2 21.3 H1677 M1647 32.5 H1661 M1663.2 32.5 H1677" stroke="#666"/></svg>
<div class="t" style="transform:scaleX(0.8667);transform-origin:0 0;left:1655px;top:47px;font-size:15px;color:#222">단</div>
<svg class="a" style="left:1658px;top:74.0px" width="8" height="4" viewBox="0 0 8 4"><path d="M0 0 H8 L4 4 Z" fill="#333"/></svg>
<div class="a" style="left:1692px;top:1px;width:1px;height:87px;background:#d8d8d8"></div>
<svg class="a" style="left:1710px;top:8px" width="26" height="29" viewBox="0 0 26 29"><circle cx="17" cy="10" r="8.5" fill="#fafafa" stroke="#666" stroke-width="1.4"/><rect x="1" y="8" width="13" height="13" fill="#c8c8c8" stroke="#777" stroke-width="1.3"/><path d="M14 13 L25 28 H6 Z" fill="#5470b8"/></svg>
<div class="t" style="transform:scaleX(0.9000);transform-origin:0 0;left:1709px;top:47px;font-size:15px;color:#222">도형</div>
<svg class="a" style="left:1718px;top:74.0px" width="8" height="4" viewBox="0 0 8 4"><path d="M0 0 H8 L4 4 Z" fill="#333"/></svg>
<svg class="a" style="left:1752px;top:9px" width="30" height="26" viewBox="0 0 30 26"><rect x="1" y="1" width="28" height="24" rx="2" fill="#fff" stroke="#777" stroke-width="1.6"/><rect x="3.5" y="3.5" width="23" height="19" fill="#3fa3dc"/><path d="M3.5 8 Q8 5 13 8 Q16 11 13 14 H3.5 Z" fill="#8fcbea"/><path d="M3.5 17.5 Q14 15 26.5 17 V22.5 H3.5 Z" fill="#8fcf6a"/><path d="M16.5 9 Q16.5 6 18 6 Q19.5 7 20.5 6 Q22 7 23 6 Q24.5 6 24.5 9 Q24.5 14 20.5 14 Q16.5 14 16.5 9 Z" fill="#f7e02a"/><path d="M20.5 14 V22 M20.5 21 Q17 19 15.5 17.5 M20.5 21 Q24 19 25.5 17.5" fill="none" stroke="#5aa040" stroke-width="1.3"/></svg>
<div class="t" style="transform:scaleX(0.9000);transform-origin:0 0;left:1753px;top:47px;font-size:15px;color:#222">그림</div>
<svg class="a" style="left:1763px;top:74.0px" width="8" height="4" viewBox="0 0 8 4"><path d="M0 0 H8 L4 4 Z" fill="#333"/></svg>
<svg class="a" style="left:1797px;top:9px" width="28" height="26" viewBox="0 0 28 26"><rect x="1" y="1" width="26" height="24" rx="2" fill="#fafafa" stroke="#777" stroke-width="1.6"/><rect x="1" y="1" width="26" height="4" fill="#5470b8"/><path d="M1 11 H27 M1 18 H27 M10 5 V25 M18 5 V25" stroke="#777" stroke-width="1.5"/></svg>
<div class="t" style="transform:scaleX(0.9333);transform-origin:0 0;left:1803px;top:47px;font-size:15px;color:#222">표</div>
<svg class="a" style="left:1807px;top:74.0px" width="8" height="4" viewBox="0 0 8 4"><path d="M0 0 H8 L4 4 Z" fill="#333"/></svg>
<svg class="a" style="left:1840px;top:9px" width="20" height="27" viewBox="0 0 20 27"><rect x="1" y="8.5" width="7" height="17.5" fill="#6aab88" stroke="#4f8d6b" stroke-width="1"/><rect x="11" y="0.5" width="7.5" height="25.5" fill="#5b7bc6" stroke="#4a68b0" stroke-width="1"/></svg>
<div class="a" style="left:1838px;top:40px;width:22px;height:25px;overflow:hidden"><div class="t" style="left:2px;top:7px;font-size:15px;color:#222">차트</div></div>
<svg class="a" style="left:1851px;top:74.0px" width="8" height="4" viewBox="0 0 8 4"><path d="M0 0 H8 L4 4 Z" fill="#333"/></svg>
<div class="a" style="left:1875px;top:-3px;width:16px;height:97px;background:#fbfbfb;border:1px solid #d0d0d0;border-radius:3px"></div>
<svg class="a" style="left:1877.5px;top:39.5px" width="12" height="9" viewBox="0 0 12 9" fill="none" stroke="#555" stroke-width="1.5"><path d="M1 1 L4.5 4.5 L1 8 M6 1 L9.5 4.5 L6 8"/></svg>
<svg class="a" style="left:1059px;top:104px" width="17" height="19" viewBox="0 0 17 19"><path d="M1 1 H11 L16 6 V18 H1 Z" fill="#fff" stroke="#666" stroke-width="1.3"/><path d="M11 1 V6 H16" fill="#eee" stroke="#666" stroke-width="1.2"/></svg>
<svg class="a" style="left:1085px;top:112.0px" width="6" height="3" viewBox="0 0 8 4"><path d="M0 0 H8 L4 4 Z" fill="#333"/></svg>
<svg class="a" style="left:1101px;top:105px" width="21" height="18" viewBox="0 0 21 18"><path d="M1 2 H7 L9 4 H16 V8" fill="#fff" stroke="#666" stroke-width="1.3"/><path d="M1 2 V17 H16 L20 8 H5 L1 17" fill="#e6c46f" stroke="#7a6a44" stroke-width="1.2"/></svg>
<svg class="a" style="left:1129px;top:112.0px" width="6" height="3" viewBox="0 0 8 4"><path d="M0 0 H8 L4 4 Z" fill="#333"/></svg>
<svg class="a" style="left:1146px;top:105px" width="18" height="18" viewBox="0 0 18 18"><rect x="1" y="1" width="16" height="16" rx="1.5" fill="#fff" stroke="#555" stroke-width="2"/><rect x="3.5" y="1" width="11" height="5" fill="#555"/><rect x="3.5" y="9" width="11" height="8" fill="#fff" stroke="#555" stroke-width="1.4"/></svg>
<svg class="a" style="left:1173px;top:112.0px" width="6" height="3" viewBox="0 0 8 4"><path d="M0 0 H8 L4 4 Z" fill="#333"/></svg>
<div class="a" style="left:1195.5px;top:104px;width:1px;height:21px;background:#d4d4d4"></div>
<svg class="a" style="left:1210px;top:105px" width="18" height="17" viewBox="0 0 18 17"><rect x="4" y="1" width="10" height="5" fill="#fff" stroke="#555" stroke-width="1.2"/><rect x="1" y="5" width="16" height="8" rx="1.5" fill="#555"/><rect x="4" y="10" width="10" height="6" fill="#fff" stroke="#555" stroke-width="1.2"/><rect x="12.5" y="7" width="2.5" height="1.3" fill="#6fa0e0"/></svg>
<svg class="a" style="left:1236px;top:105px" width="18" height="18" viewBox="0 0 18 18"><rect x="1" y="1" width="16" height="16" rx="1.5" fill="#fff" stroke="#555" stroke-width="2"/><path d="M5 5 H10 M5 8 H13 M5 11 H13 M5 14 H13" stroke="#555" stroke-width="1.3"/></svg>
<div class="a" style="left:1267.6px;top:104px;width:1px;height:21px;background:#d4d4d4"></div>
<svg class="a" style="left:1282px;top:107px" width="18" height="14" viewBox="0 0 18 14"><path d="M17 13 C16 6 10 4 5 6.5" fill="none" stroke="#555" stroke-width="2.6"/><path d="M1 7 L7 1.5 L8 10 Z" fill="#555"/></svg>
<svg class="a" style="left:1309px;top:112.0px" width="6" height="3" viewBox="0 0 8 4"><path d="M0 0 H8 L4 4 Z" fill="#333"/></svg>
<svg class="a" style="left:1326px;top:107px" width="18" height="14" viewBox="0 0 18 14"><path d="M1 13 C2 6 8 4 13 6.5" fill="none" stroke="#d2d2d2" stroke-width="2.6"/><path d="M17 7 L11 1.5 L10 10 Z" fill="#d2d2d2"/></svg>
<svg class="a" style="left:1353px;top:112.0px" width="6" height="3" viewBox="0 0 8 4"><path d="M0 0 H8 L4 4 Z" fill="#c8c8c8"/></svg>
<div class="a" style="left:1376px;top:104px;width:1px;height:21px;background:#d4d4d4"></div>
<div class="a" style="left:1390px;top:101.5px;width:132px;height:25px;background:#fff;border:1px solid #c8c8c8;border-radius:3px"></div>
<div class="a" style="left:1503px;top:103px;width:1px;height:22px;background:#ececec"></div>
<svg class="a" style="left:1509.5px;top:112.5px" width="6" height="3" viewBox="0 0 8 4"><path d="M0 0 H8 L4 4 Z" fill="#555"/></svg>
<svg class="a" style="left:1395px;top:106px" width="16" height="17" viewBox="0 0 16 17" stroke="#555" stroke-width="1.3"><path d="M1 1 H15 M4 4 H15 M1 7 H15 M4 10 H15 M1 13 H15 M1 16 H15"/></svg>
<div class="t" style="transform:scaleX(0.9333);transform-origin:0 0;left:1414px;top:106px;font-size:15px;color:#222">바탕글</div>
<div class="a" style="left:1530px;top:101.5px;width:109px;height:25px;background:#fff;border:1px solid #c8c8c8;border-radius:3px"></div>
<div class="a" style="left:1621px;top:103px;width:1px;height:22px;background:#ececec"></div>
<svg class="a" style="left:1626.5px;top:112.5px" width="6" height="3" viewBox="0 0 8 4"><path d="M0 0 H8 L4 4 Z" fill="#555"/></svg>
<div class="t" style="transform:scaleX(0.9000);transform-origin:0 0;left:1535px;top:106px;font-size:15px;color:#222">대표</div>
<div class="a" style="left:1648px;top:101.5px;width:148px;height:25px;background:#fff;border:1px solid #c8c8c8;border-radius:3px"></div>
<div class="a" style="left:1779px;top:103px;width:1px;height:22px;background:#ececec"></div>
<svg class="a" style="left:1783.5px;top:112.5px" width="6" height="3" viewBox="0 0 8 4"><path d="M0 0 H8 L4 4 Z" fill="#555"/></svg>
<svg class="a" style="left:1654px;top:106px" width="17" height="17" viewBox="0 0 17 17"><text x="0" y="13" font-size="14" fill="#3aaa8c" font-family="Liberation Serif" font-weight="bold">T</text><text x="5" y="16" font-size="14" fill="#2b8f73" font-family="Liberation Serif" font-weight="bold">T</text></svg>
<div class="t" style="transform:scaleX(0.8933);transform-origin:0 0;left:1678px;top:106px;font-size:15px;color:#222">함초롬바탕</div>
<div class="a" style="left:1876px;top:101px;width:15.5px;height:26px;background:#fbfbfb;border:1px solid #cfcfcf;border-radius:3px"></div>
<svg class="a" style="left:1879.5px;top:107px" width="9" height="13" viewBox="0 0 9 13" fill="none" stroke="#666" stroke-width="1.5"><path d="M1 2 L4.5 5.5 L8 2 M1 7 L4.5 10.5 L8 7"/></svg>
<div class="a" style="left:1037px;top:137px;width:22px;height:22px;background:#f6f6f6;border:1px solid #a9a9a9"></div>
<svg class="a" style="left:1043px;top:143px" width="10" height="9" viewBox="0 0 10 9"><path d="M1.5 0 V7.5 H10" fill="none" stroke="#777" stroke-width="2.4"/></svg>
<div class="a" style="left:1079px;top:139px;width:792px;height:18px;background:#f4f4f4;border-bottom:1px solid #a8a8a8;border-top:1px solid #c0c0c0"></div>
<div class="a" style="left:1079px;top:140px;width:143px;height:16px;background:#e0e0e0"></div>
<div class="t" style="left:1071.2px;top:141px;width:20px;text-align:center;font-size:12.5px;color:#5c5c5c">3</div>
<div class="t" style="left:1118.3px;top:141px;width:20px;text-align:center;font-size:12.5px;color:#5c5c5c">2</div>
<div class="t" style="left:1165.4px;top:141px;width:20px;text-align:center;font-size:12.5px;color:#5c5c5c">1</div>
<div class="t" style="left:1212.4px;top:141px;width:20px;text-align:center;font-size:12.5px;color:#5c5c5c">0</div>
<div class="t" style="left:1259.5px;top:141px;width:20px;text-align:center;font-size:12.5px;color:#5c5c5c">1</div>
<div class="t" style="left:1306.5px;top:141px;width:20px;text-align:center;font-size:12.5px;color:#5c5c5c">2</div>
<div class="t" style="left:1353.6px;top:141px;width:20px;text-align:center;font-size:12.5px;color:#5c5c5c">3</div>
<div class="t" style="left:1400.6px;top:141px;width:20px;text-align:center;font-size:12.5px;color:#5c5c5c">4</div>
<div class="t" style="left:1447.7px;top:141px;width:20px;text-align:center;font-size:12.5px;color:#5c5c5c">5</div>
<div class="t" style="left:1494.7px;top:141px;width:20px;text-align:center;font-size:12.5px;color:#5c5c5c">6</div>
<div class="t" style="left:1541.8px;top:141px;width:20px;text-align:center;font-size:12.5px;color:#5c5c5c">7</div>
<div class="t" style="left:1588.8px;top:141px;width:20px;text-align:center;font-size:12.5px;color:#5c5c5c">8</div>
<div class="t" style="left:1635.9px;top:141px;width:20px;text-align:center;font-size:12.5px;color:#5c5c5c">9</div>
<div class="t" style="left:1682.9px;top:141px;width:20px;text-align:center;font-size:12.5px;color:#5c5c5c">10</div>
<div class="t" style="left:1730.0px;top:141px;width:20px;text-align:center;font-size:12.5px;color:#5c5c5c">11</div>
<div class="t" style="left:1777.0px;top:141px;width:20px;text-align:center;font-size:12.5px;color:#5c5c5c">12</div>
<div class="t" style="left:1824.1px;top:141px;width:20px;text-align:center;font-size:12.5px;color:#5c5c5c">13</div>
<svg class="a" style="left:0;top:0" width="1893" height="170"><path d="M1081.2 150 V156 M1086.0 153.5 V156 M1090.7 153.5 V156 M1095.4 153.5 V156 M1100.1 153.5 V156 M1104.8 152 V156 M1109.5 153.5 V156 M1114.2 153.5 V156 M1118.9 153.5 V156 M1123.6 153.5 V156 M1128.3 150 V156 M1133.0 153.5 V156 M1137.7 153.5 V156 M1142.4 153.5 V156 M1147.1 153.5 V156 M1151.8 152 V156 M1156.5 153.5 V156 M1161.2 153.5 V156 M1165.9 153.5 V156 M1170.6 153.5 V156 M1175.4 150 V156 M1180.1 153.5 V156 M1184.8 153.5 V156 M1189.5 153.5 V156 M1194.2 153.5 V156 M1198.9 152 V156 M1203.6 153.5 V156 M1208.3 153.5 V156 M1213.0 153.5 V156 M1217.7 153.5 V156 M1222.4 150 V156 M1227.1 153.5 V156 M1231.8 153.5 V156 M1236.5 153.5 V156 M1241.2 153.5 V156 M1245.9 152 V156 M1250.6 153.5 V156 M1255.3 153.5 V156 M1260.0 153.5 V156 M1264.7 153.5 V156 M1269.5 150 V156 M1274.2 153.5 V156 M1278.9 153.5 V156 M1283.6 153.5 V156 M1288.3 153.5 V156 M1293.0 152 V156 M1297.7 153.5 V156 M1302.4 153.5 V156 M1307.1 153.5 V156 M1311.8 153.5 V156 M1316.5 150 V156 M1321.2 153.5 V156 M1325.9 153.5 V156 M1330.6 153.5 V156 M1335.3 153.5 V156 M1340.0 152 V156 M1344.7 153.5 V156 M1349.4 153.5 V156 M1354.1 153.5 V156 M1358.8 153.5 V156 M1363.6 150 V156 M1368.3 153.5 V156 M1373.0 153.5 V156 M1377.7 153.5 V156 M1382.4 153.5 V156 M1387.1 152 V156 M1391.8 153.5 V156 M1396.5 153.5 V156 M1401.2 153.5 V156 M1405.9 153.5 V156 M1410.6 150 V156 M1415.3 153.5 V156 M1420.0 153.5 V156 M1424.7 153.5 V156 M1429.4 153.5 V156 M1434.1 152 V156 M1438.8 153.5 V156 M1443.5 153.5 V156 M1448.2 153.5 V156 M1452.9 153.5 V156 M1457.7 150 V156 M1462.4 153.5 V156 M1467.1 153.5 V156 M1471.8 153.5 V156 M1476.5 153.5 V156 M1481.2 152 V156 M1485.9 153.5 V156 M1490.6 153.5 V156 M1495.3 153.5 V156 M1500.0 153.5 V156 M1504.7 150 V156 M1509.4 153.5 V156 M1514.1 153.5 V156 M1518.8 153.5 V156 M1523.5 153.5 V156 M1528.2 152 V156 M1532.9 153.5 V156 M1537.6 153.5 V156 M1542.3 153.5 V156 M1547.0 153.5 V156 M1551.8 150 V156 M1556.5 153.5 V156 M1561.2 153.5 V156 M1565.9 153.5 V156 M1570.6 153.5 V156 M1575.3 152 V156 M1580.0 153.5 V156 M1584.7 153.5 V156 M1589.4 153.5 V156 M1594.1 153.5 V156 M1598.8 150 V156 M1603.5 153.5 V156 M1608.2 153.5 V156 M1612.9 153.5 V156 M1617.6 153.5 V156 M1622.3 152 V156 M1627.0 153.5 V156 M1631.7 153.5 V156 M1636.4 153.5 V156 M1641.1 153.5 V156 M1645.9 150 V156 M1650.6 153.5 V156 M1655.3 153.5 V156 M1660.0 153.5 V156 M1664.7 153.5 V156 M1669.4 152 V156 M1674.1 153.5 V156 M1678.8 153.5 V156 M1683.5 153.5 V156 M1688.2 153.5 V156 M1692.9 150 V156 M1697.6 153.5 V156 M1702.3 153.5 V156 M1707.0 153.5 V156 M1711.7 153.5 V156 M1716.4 152 V156 M1721.1 153.5 V156 M1725.8 153.5 V156 M1730.5 153.5 V156 M1735.2 153.5 V156 M1740.0 150 V156 M1744.7 153.5 V156 M1749.4 153.5 V156 M1754.1 153.5 V156 M1758.8 153.5 V156 M1763.5 152 V156 M1768.2 153.5 V156 M1772.9 153.5 V156 M1777.6 153.5 V156 M1782.3 153.5 V156 M1787.0 150 V156 M1791.7 153.5 V156 M1796.4 153.5 V156 M1801.1 153.5 V156 M1805.8 153.5 V156 M1810.5 152 V156 M1815.2 153.5 V156 M1819.9 153.5 V156 M1824.6 153.5 V156 M1829.3 153.5 V156 M1834.1 150 V156 M1838.8 153.5 V156 M1843.5 153.5 V156 M1848.2 153.5 V156 M1852.9 153.5 V156 M1857.6 152 V156 M1862.3 153.5 V156 M1867.0 153.5 V156" stroke="#8a8a8a" stroke-width="1"/></svg>
<svg class="a" style="left:0;top:0" width="1893" height="170"><path d="M1288.5 157 V163 M1355.2 157 V163 M1421.9 157 V163 M1488.6 157 V163 M1555.3 157 V163 M1622.0 157 V163 M1688.7 157 V163 M1755.4 157 V163 M1822.1 157 V163" stroke="#9a9a9a" stroke-width="1"/></svg>
<svg class="a" style="left:1075px;top:134px" width="12" height="7" viewBox="0 0 12 7"><rect x="0.5" y="0.5" width="11" height="5" fill="#fff" stroke="#777"/></svg>
<svg class="a" style="left:1216px;top:136px" width="13" height="30" viewBox="0 0 13 30" fill="#fff" stroke="#777" stroke-width="1.1"><path d="M1 1 H12 V5 L6.5 11 L1 5 Z"/><path d="M6.5 12 L12 18 V21 H1 V18 Z"/><rect x="1" y="21" width="11" height="7"/></svg>
<div class="a" style="left:1039px;top:179.5px;width:18.5px;height:461px;background:#f4f4f4;border:1px solid #a9a9a9;border-bottom:none"></div>
<div class="a" style="left:1040px;top:180.5px;width:16.5px;height:165.5px;background:#e0e0e0"></div>
<svg class="a" style="left:0;top:0" width="1893" height="718"><path d="M1053 181.3 H1057 M1054.5 186.0 H1057 M1054.5 190.7 H1057 M1054.5 195.4 H1057 M1054.5 200.1 H1057 M1052 204.8 H1057 M1054.5 209.6 H1057 M1054.5 214.3 H1057 M1054.5 219.0 H1057 M1054.5 223.7 H1057 M1053 228.4 H1057 M1054.5 233.1 H1057 M1054.5 237.8 H1057 M1054.5 242.5 H1057 M1054.5 247.2 H1057 M1052 251.9 H1057 M1054.5 256.6 H1057 M1054.5 261.3 H1057 M1054.5 266.0 H1057 M1054.5 270.7 H1057 M1053 275.4 H1057 M1054.5 280.1 H1057 M1054.5 284.8 H1057 M1054.5 289.5 H1057 M1054.5 294.2 H1057 M1052 298.9 H1057 M1054.5 303.7 H1057 M1054.5 308.4 H1057 M1054.5 313.1 H1057 M1054.5 317.8 H1057 M1053 322.5 H1057 M1054.5 327.2 H1057 M1054.5 331.9 H1057 M1054.5 336.6 H1057 M1054.5 341.3 H1057 M1052 346.0 H1057 M1054.5 350.7 H1057 M1054.5 355.4 H1057 M1054.5 360.1 H1057 M1054.5 364.8 H1057 M1053 369.5 H1057 M1054.5 374.2 H1057 M1054.5 378.9 H1057 M1054.5 383.6 H1057 M1054.5 388.3 H1057 M1052 393.1 H1057 M1054.5 397.8 H1057 M1054.5 402.5 H1057 M1054.5 407.2 H1057 M1054.5 411.9 H1057 M1053 416.6 H1057 M1054.5 421.3 H1057 M1054.5 426.0 H1057 M1054.5 430.7 H1057 M1054.5 435.4 H1057 M1052 440.1 H1057 M1054.5 444.8 H1057 M1054.5 449.5 H1057 M1054.5 454.2 H1057 M1054.5 458.9 H1057 M1053 463.6 H1057 M1054.5 468.3 H1057 M1054.5 473.0 H1057 M1054.5 477.7 H1057 M1054.5 482.4 H1057 M1052 487.1 H1057 M1054.5 491.9 H1057 M1054.5 496.6 H1057 M1054.5 501.3 H1057 M1054.5 506.0 H1057 M1053 510.7 H1057 M1054.5 515.4 H1057 M1054.5 520.1 H1057 M1054.5 524.8 H1057 M1054.5 529.5 H1057 M1052 534.2 H1057 M1054.5 538.9 H1057 M1054.5 543.6 H1057 M1054.5 548.3 H1057 M1054.5 553.0 H1057 M1053 557.7 H1057 M1054.5 562.4 H1057 M1054.5 567.1 H1057 M1054.5 571.8 H1057 M1054.5 576.5 H1057 M1052 581.2 H1057 M1054.5 586.0 H1057 M1054.5 590.7 H1057 M1054.5 595.4 H1057 M1054.5 600.1 H1057 M1053 604.8 H1057 M1054.5 609.5 H1057 M1054.5 614.2 H1057 M1054.5 618.9 H1057 M1054.5 623.6 H1057" stroke="#8a8a8a" stroke-width="1"/></svg>
<div class="t" style="left:1038px;top:198.9px;width:12px;text-align:center;font-size:12px;color:#5c5c5c;transform:rotate(-90deg)">3</div>
<div class="t" style="left:1038px;top:245.9px;width:12px;text-align:center;font-size:12px;color:#5c5c5c;transform:rotate(-90deg)">2</div>
<div class="t" style="left:1038px;top:292.9px;width:12px;text-align:center;font-size:12px;color:#5c5c5c;transform:rotate(-90deg)">1</div>
<div class="t" style="left:1038px;top:387.1px;width:12px;text-align:center;font-size:12px;color:#5c5c5c;transform:rotate(-90deg)">1</div>
<div class="t" style="left:1038px;top:434.1px;width:12px;text-align:center;font-size:12px;color:#5c5c5c;transform:rotate(-90deg)">2</div>
<div class="t" style="left:1038px;top:481.1px;width:12px;text-align:center;font-size:12px;color:#5c5c5c;transform:rotate(-90deg)">3</div>
<div class="t" style="left:1038px;top:528.2px;width:12px;text-align:center;font-size:12px;color:#5c5c5c;transform:rotate(-90deg)">4</div>
<div class="t" style="left:1038px;top:575.2px;width:12px;text-align:center;font-size:12px;color:#5c5c5c;transform:rotate(-90deg)">5</div>
<div class="t" style="left:1038px;top:622.3px;width:12px;text-align:center;font-size:12px;color:#5c5c5c;transform:rotate(-90deg)">6</div>
<svg class="a" style="left:1038px;top:274px" width="12" height="12" viewBox="0 0 12 12" fill="#fff" stroke="#777" stroke-width="1.1"><path d="M5 1 H11 V10 H5 V6.5 H1 V4 H5 Z"/></svg>
<svg class="a" style="left:1037px;top:340px" width="14" height="14" viewBox="0 0 14 14" fill="#fff" stroke="#777" stroke-width="1.1"><path d="M1 1 H9 L13 5 V8 L9 12 H6 V8 H1 Z"/></svg>
<svg class="a" style="left:1049px;top:361px" width="11" height="13" viewBox="0 0 11 13" fill="#fff" stroke="#777" stroke-width="1.1"><path d="M6 1 V7 H10 V12 H1 V7 H4 V1 Z"/></svg>
<div class="a" style="left:1079px;top:178.8px;width:793px;height:462px;background:#fff;border-top:1px solid #a9a9a9;border-left:1px solid #a9a9a9"></div>
<div class="a" style="left:1221.5px;top:323px;width:1px;height:23px;background:#b9b9b9"></div>
<div class="a" style="left:1198px;top:345px;width:24px;height:1px;background:#b9b9b9"></div>
<div class="t" style="transform:scaleX(1.0015);transform-origin:0 0;left:1222.5px;top:344.6px;font-size:19px;color:#262626;font-family:'Liberation Serif',serif">col(column)</div>
<div class="t" style="transform:scaleX(0.9786);transform-origin:0 0;left:1333.6px;top:347.5px;font-size:16px;color:#151515;font-family:'Liberation Serif',serif">열(영어)</div>
<div class="t" style="transform:scaleX(0.9641);transform-origin:0 0;left:1222.5px;top:371.2px;font-size:19px;color:#262626;font-family:'Liberation Serif',serif">row</div>
<div class="t" style="transform:scaleX(1.0059);transform-origin:0 0;left:1335px;top:374.1px;font-size:16px;color:#151515;font-family:'Liberation Serif',serif">행(숫자)</div>
<div class="t" style="transform:scaleX(1.0681);transform-origin:0 0;left:1222.5px;top:397.7px;font-size:19px;color:#262626;font-family:'Liberation Serif',serif">number</div>
<div class="t" style="transform:scaleX(1.0000);transform-origin:0 0;left:1335px;top:400.6px;font-size:16px;color:#151515;font-family:'Liberation Serif',serif">숫자</div>
<div class="t" style="transform:scaleX(1.0335);transform-origin:0 0;left:1222.5px;top:424.2px;font-size:19px;color:#262626;font-family:'Liberation Serif',serif">ref</div>
<div class="t" style="transform:scaleX(0.9219);transform-origin:0 0;left:1336.7px;top:427.1px;font-size:16px;color:#151515;font-family:'Liberation Serif',serif">범위</div>
<div class="t" style="transform:scaleX(1.0592);transform-origin:0 0;left:1222.5px;top:450.8px;font-size:19px;color:#262626;font-family:'Liberation Serif',serif">range</div>
<div class="t" style="transform:scaleX(0.9219);transform-origin:0 0;left:1335.7px;top:453.7px;font-size:16px;color:#151515;font-family:'Liberation Serif',serif">범위</div>
<div class="t" style="transform:scaleX(1.1094);transform-origin:0 0;left:1222.5px;top:477.4px;font-size:19px;color:#262626;font-family:'Liberation Serif',serif">array</div>
<div class="t" style="transform:scaleX(0.9219);transform-origin:0 0;left:1332.6px;top:480.2px;font-size:16px;color:#151515;font-family:'Liberation Serif',serif">범위</div>
<div class="t" style="transform:scaleX(1.0156);transform-origin:0 0;left:1222.5px;top:503.9px;font-size:19px;color:#262626;font-family:'Liberation Serif',serif">value</div>
<div class="t" style="transform:scaleX(1.0125);transform-origin:0 0;left:1332px;top:506.8px;font-size:16px;color:#151515;font-family:'Liberation Serif',serif">값</div>
<div class="t" style="transform:scaleX(1.0633);transform-origin:0 0;left:1222.5px;top:530.5px;font-size:19px;color:#262626;font-family:'Liberation Serif',serif">criteria</div>
<div class="t" style="transform:scaleX(1.0000);transform-origin:0 0;left:1331px;top:533.4px;font-size:16px;color:#151515;font-family:'Liberation Serif',serif">기준</div>
<div class="t" style="transform:scaleX(0.9418);transform-origin:0 0;left:1222.5px;top:557.0px;font-size:19px;color:#262626;font-family:'Liberation Serif',serif">filed</div>
<div class="t" style="transform:scaleX(1.0000);transform-origin:0 0;left:1331px;top:559.9px;font-size:16px;color:#151515;font-family:'Liberation Serif',serif">필드</div>
<div class="t" style="transform:scaleX(1.0000);transform-origin:0 0;left:1222.5px;top:583.6px;font-size:19px;color:#262626;font-family:'Liberation Serif',serif">text</div>
<div class="t" style="transform:scaleX(0.9417);transform-origin:0 0;left:1327.8px;top:586.5px;font-size:16px;color:#151515;font-family:'Liberation Serif',serif">문자열</div>
<div class="a" style="left:1222px;top:361px;width:168px;height:2px;background:repeating-linear-gradient(90deg,#f08a3c 0 1.5px,transparent 1.5px 3px)"></div>
<div class="a" style="left:1393px;top:346px;width:1.6px;height:17px;background:#000"></div>
<div class="a" style="left:1872px;top:130px;width:21px;height:510px;background:#d3d3d3"></div>
<div class="a" style="left:1873px;top:131.5px;width:17px;height:11.0px;background:#f3f3f3;border:1px solid #bdbdbd"></div>
<div class="a" style="left:1876px;top:136px;width:11px;height:2.2px;background:#777"></div>
<div class="a" style="left:1873px;top:146.8px;width:17px;height:19.69999999999999px;background:#f3f3f3;border:1px solid #bdbdbd"></div>
<svg class="a" style="left:1877px;top:153px" width="9" height="5" viewBox="0 0 9 5"><path d="M0 5 L4.5 0 L9 5 Z" fill="#777"/></svg>
<div class="a" style="left:1874.5px;top:167.7px;width:12.5px;height:62.5px;background:#f0f0f0;border:1px solid #b9b9b9;border-radius:7px"></div>
<div class="a" style="left:1873px;top:550px;width:17px;height:19px;background:#f3f3f3;border:1px solid #bdbdbd"></div>
<svg class="a" style="left:1877px;top:557px" width="9" height="5" viewBox="0 0 9 5"><path d="M0 0 L4.5 5 L9 0 Z" fill="#777"/></svg>
<div class="a" style="left:1873px;top:572px;width:17px;height:21px;background:#f3f3f3;border:1px solid #bdbdbd"></div>
<div class="a" style="left:1876.5px;top:577px;width:10px;height:10px;border:1.3px solid #777"></div><div class="a" style="left:1879.5px;top:580px;width:4px;height:4px;border:1.2px solid #777"></div>
<div class="a" style="left:1873px;top:596.6px;width:17px;height:20.399999999999977px;background:#f3f3f3;border:1px solid #bdbdbd"></div>
<svg class="a" style="left:1877px;top:601px" width="9" height="10" viewBox="0 0 9 10" fill="#777"><path d="M0 4 L4.5 0 L9 4 Z M0 10 L4.5 6 L9 10 Z"/></svg>
<div class="a" style="left:1873px;top:617px;width:17px;height:21.700000000000045px;background:#f3f3f3;border:1px solid #bdbdbd"></div>
<svg class="a" style="left:1877px;top:622px" width="9" height="10" viewBox="0 0 9 10" fill="#777"><path d="M0 0 L4.5 4 L9 0 Z M0 6 L4.5 10 L9 6 Z"/></svg>
<div class="a" style="left:1030px;top:640px;width:863px;height:36px;background:#dadada;border-top:1px solid #a9a9a9"></div>
<svg class="a" style="left:1045px;top:648px" width="16" height="17" viewBox="0 0 16 17" fill="none" stroke="#777" stroke-width="1.3"><path d="M1 1 H15 V12 L11 16 H1 Z"/><path d="M4 16 V13 H10"/></svg>
<div class="a" style="left:1071.5px;top:648px;width:1px;height:20px;background:#b0b0b0"></div>
<svg class="a" style="left:1082px;top:652px" width="85" height="10" viewBox="0 0 85 10" fill="#b3b3b3"><rect x="0" y="0" width="1.5" height="10"/><path d="M8 0 L2.5 5 L8 10 Z"/><path d="M30 0 L24.5 5 L30 10 Z"/><path d="M53 0 L58.5 5 L53 10 Z"/><path d="M75 0 L80.5 5 L75 10 Z"/><rect x="81.5" y="0" width="1.5" height="10"/></svg>
<svg class="a" style="left:1170px;top:636px" width="190" height="40" viewBox="1170 636 190 40">
<path d="M1301 641.5 L1310.5 667 Q1312 670.5 1316 670.5 H1335 Q1339 670.5 1340.5 667 L1349.5 641.5" fill="#e9e9e9" stroke="#9c9c9c" stroke-width="1"/>
<path d="M1178.5 641.5 L1188.5 667 Q1190 670.5 1194 670.5 H1285 Q1289 670.5 1290.5 667 L1300.5 641.5 Z" fill="#fff" stroke="#9c9c9c" stroke-width="1"/>
<path d="M1179.5 641.5 H1300" stroke="#fff" stroke-width="1.4"/>
</svg>
<div class="t" style="transform:scaleX(0.8511);transform-origin:0 0;left:1209.7px;top:648px;font-size:16px;color:#c23a40;font-weight:bold">빈 문서 1</div>
<svg class="a" style="left:1318px;top:650px" width="13" height="13" viewBox="0 0 14 14"><path d="M7 0.5 V13.5 M0.5 7 H13.5" stroke="#666" stroke-width="2.2"/></svg>
<div class="a" style="left:1441.5px;top:641px;width:3px;height:34px;background:repeating-linear-gradient(180deg,#777 0 1.2px,transparent 1.2px 2.5px);border-left:1px dotted #777"></div>
<div class="a" style="left:1469px;top:649.5px;width:366px;height:18px;background:#cdcdcd"></div>
<div class="a" style="left:1449px;top:649.6px;width:20.40000000000009px;height:17.699999999999932px;background:#f3f3f3;border:1px solid #bdbdbd"></div>
<svg class="a" style="left:1456px;top:654px" width="5" height="9" viewBox="0 0 5 9"><path d="M5 0 L0 4.5 L5 9 Z" fill="#666"/></svg>
<div class="a" style="left:1471px;top:651px;width:285px;height:14.5px;background:#efefef;border:1px solid #c0c0c0;border-radius:8px"></div>
<div class="a" style="left:1834.7px;top:649px;width:19.899999999999864px;height:18.799999999999955px;background:#f3f3f3;border:1px solid #bdbdbd"></div>
<svg class="a" style="left:1842px;top:654px" width="5" height="9" viewBox="0 0 5 9"><path d="M0 0 L5 4.5 L0 9 Z" fill="#666"/></svg>
<div class="a" style="left:1857px;top:649px;width:12px;height:18.799999999999955px;background:#f3f3f3;border:1px solid #bdbdbd"></div>
<div class="a" style="left:1862px;top:653px;width:2px;height:11px;background:#666"></div>
<div class="a" style="left:1024px;top:676px;width:869px;height:32px;background:#f9f9f9;border-top:1px solid #c6c6c6"></div>
<div class="a" style="left:1023px;top:707.5px;width:870px;height:1.2px;background:#8a8a8a"></div>
<div class="t" style="transform:scaleX(1.0318);transform-origin:0 0;left:1050px;top:685px;font-size:15px;color:#5a5a5a">1/2쪽</div>
<div class="t" style="transform:scaleX(0.8996);transform-origin:0 0;left:1114px;top:685px;font-size:15px;color:#5a5a5a">1단</div>
<div class="t" style="transform:scaleX(0.9424);transform-origin:0 0;left:1165px;top:685px;font-size:15px;color:#5a5a5a">1줄</div>
<div class="t" style="transform:scaleX(0.9467);transform-origin:0 0;left:1213px;top:685px;font-size:15px;color:#5a5a5a">21칸</div>
<div class="t" style="transform:scaleX(0.9813);transform-origin:0 0;left:1271px;top:685px;font-size:15px;color:#5a5a5a">591글자</div>
<div class="t" style="transform:scaleX(0.9194);transform-origin:0 0;left:1354px;top:685px;font-size:15px;color:#5a5a5a">문자 입력</div>
<div class="a" style="left:1149.4px;top:679px;width:1px;height:27px;background:#d2d2d2"></div>
<div class="a" style="left:1256px;top:679px;width:1px;height:27px;background:#d2d2d2"></div>
<div class="a" style="left:1339px;top:679px;width:1px;height:27px;background:#d2d2d2"></div>
<div class="a" style="left:1426.7px;top:679px;width:1px;height:27px;background:#d2d2d2"></div>
<div class="a" style="left:1462px;top:680px;width:25px;height:24.5px;background:#d8e3f8;border:1px solid #8eaee6"></div>
<svg class="a" style="left:1465px;top:683px" width="19" height="19" viewBox="0 0 19 19" fill="none" stroke="#777" stroke-width="1.4"><rect x="1" y="1" width="17" height="17"/><path d="M4 18 V4 H15 V18"/></svg>
<svg class="a" style="left:1500px;top:683px" width="18" height="18" viewBox="0 0 18 18" fill="none" stroke="#777" stroke-width="1.3"><rect x="1" y="1" width="16" height="16" rx="1"/><path d="M4 9 L6 7.5 V10.5 Z M14 9 L12 7.5 V10.5 Z" fill="#777"/></svg>
<svg class="a" style="left:1535px;top:683px" width="18" height="18" viewBox="0 0 18 18"><rect x="1" y="1" width="16" height="16" rx="1" fill="#fff" stroke="#5470b8" stroke-width="1.5"/><rect x="4.5" y="4.5" width="9" height="9" fill="#888"/></svg>
<div class="a" style="left:1570px;top:681px;width:1px;height:22px;background:#cfcfcf"></div>
<svg class="a" style="left:1588px;top:684px" width="17" height="17" viewBox="0 0 17 17"><rect x="1" y="1" width="15" height="15" rx="1" fill="#fff" stroke="#888" stroke-width="1.2"/><rect x="6" y="6" width="5" height="5" fill="none" stroke="#5470b8" stroke-width="1.3"/></svg>
<div class="a" style="left:1621px;top:691.5px;width:109.5px;height:2px;background:#4a6cc0"></div>
<div class="a" style="left:1668.5px;top:686px;width:13px;height:13px;background:#fff;border:1.2px solid #777;border-radius:50%"></div>
<svg class="a" style="left:1745px;top:683px" width="17" height="17" viewBox="0 0 17 17"><rect x="1" y="1" width="15" height="15" rx="1" fill="#fff" stroke="#888" stroke-width="1.2"/><rect x="3.5" y="3.5" width="10" height="10" fill="#c7d5f2" stroke="#5470b8" stroke-width="1.2"/></svg>
<svg class="a" style="left:1784px;top:684px" width="19" height="19" viewBox="0 0 19 19"><circle cx="7.5" cy="7.5" r="5.5" fill="none" stroke="#666" stroke-width="1.6"/><path d="M11.5 11.5 L17 17" stroke="#555" stroke-width="3"/></svg>
<div class="t" style="transform:scaleX(1.0033);transform-origin:0 0;left:1820.5px;top:685px;font-size:15px;color:#5a5a5a">100%</div>
<svg class="a" style="left:1880px;top:697px" width="11" height="10" viewBox="0 0 11 10"><path d="M1 10 L11 0 M6 10 L11 5" stroke="#c0c0c0"/></svg>
<div class="a" style="left:1023px;top:708.7px;width:870px;height:10px;background:linear-gradient(90deg,#ececec 0,#eeeeee 230px,#3a3a3a 230px,#3a3a3a 234px,#f0f0f0 236px,#fff 300px,#fff 100%)"></div>
<div class="a" style="left:1136px;top:708.5px;width:71px;height:3px;background:#666;border-radius:0 0 3px 3px"></div>
<div class="a" style="left:1603px;top:710px;width:34px;height:8px;border:1.5px solid #777;border-bottom:none;border-radius:2px 2px 0 0"></div>
<!-- overlay -->
<div class="a" style="left:720.3px;top:238.1px;width:39px;height:39px;border-radius:50%;background:radial-gradient(circle,rgba(238,238,40,0.58) 0,rgba(238,238,40,0.52) 72%,rgba(238,238,40,0.3) 100%)"></div>
<svg class="a" style="left:724px;top:253.5px" width="11" height="11" viewBox="0 0 13 13"><path d="M4.5 1 H8.5 V4.5 H12 V8.5 H8.5 V12 H4.5 V8.5 H1 V4.5 H4.5 Z" fill="#fff" stroke="#111" stroke-width="1.6" stroke-linejoin="round"/></svg>

</body></html>
